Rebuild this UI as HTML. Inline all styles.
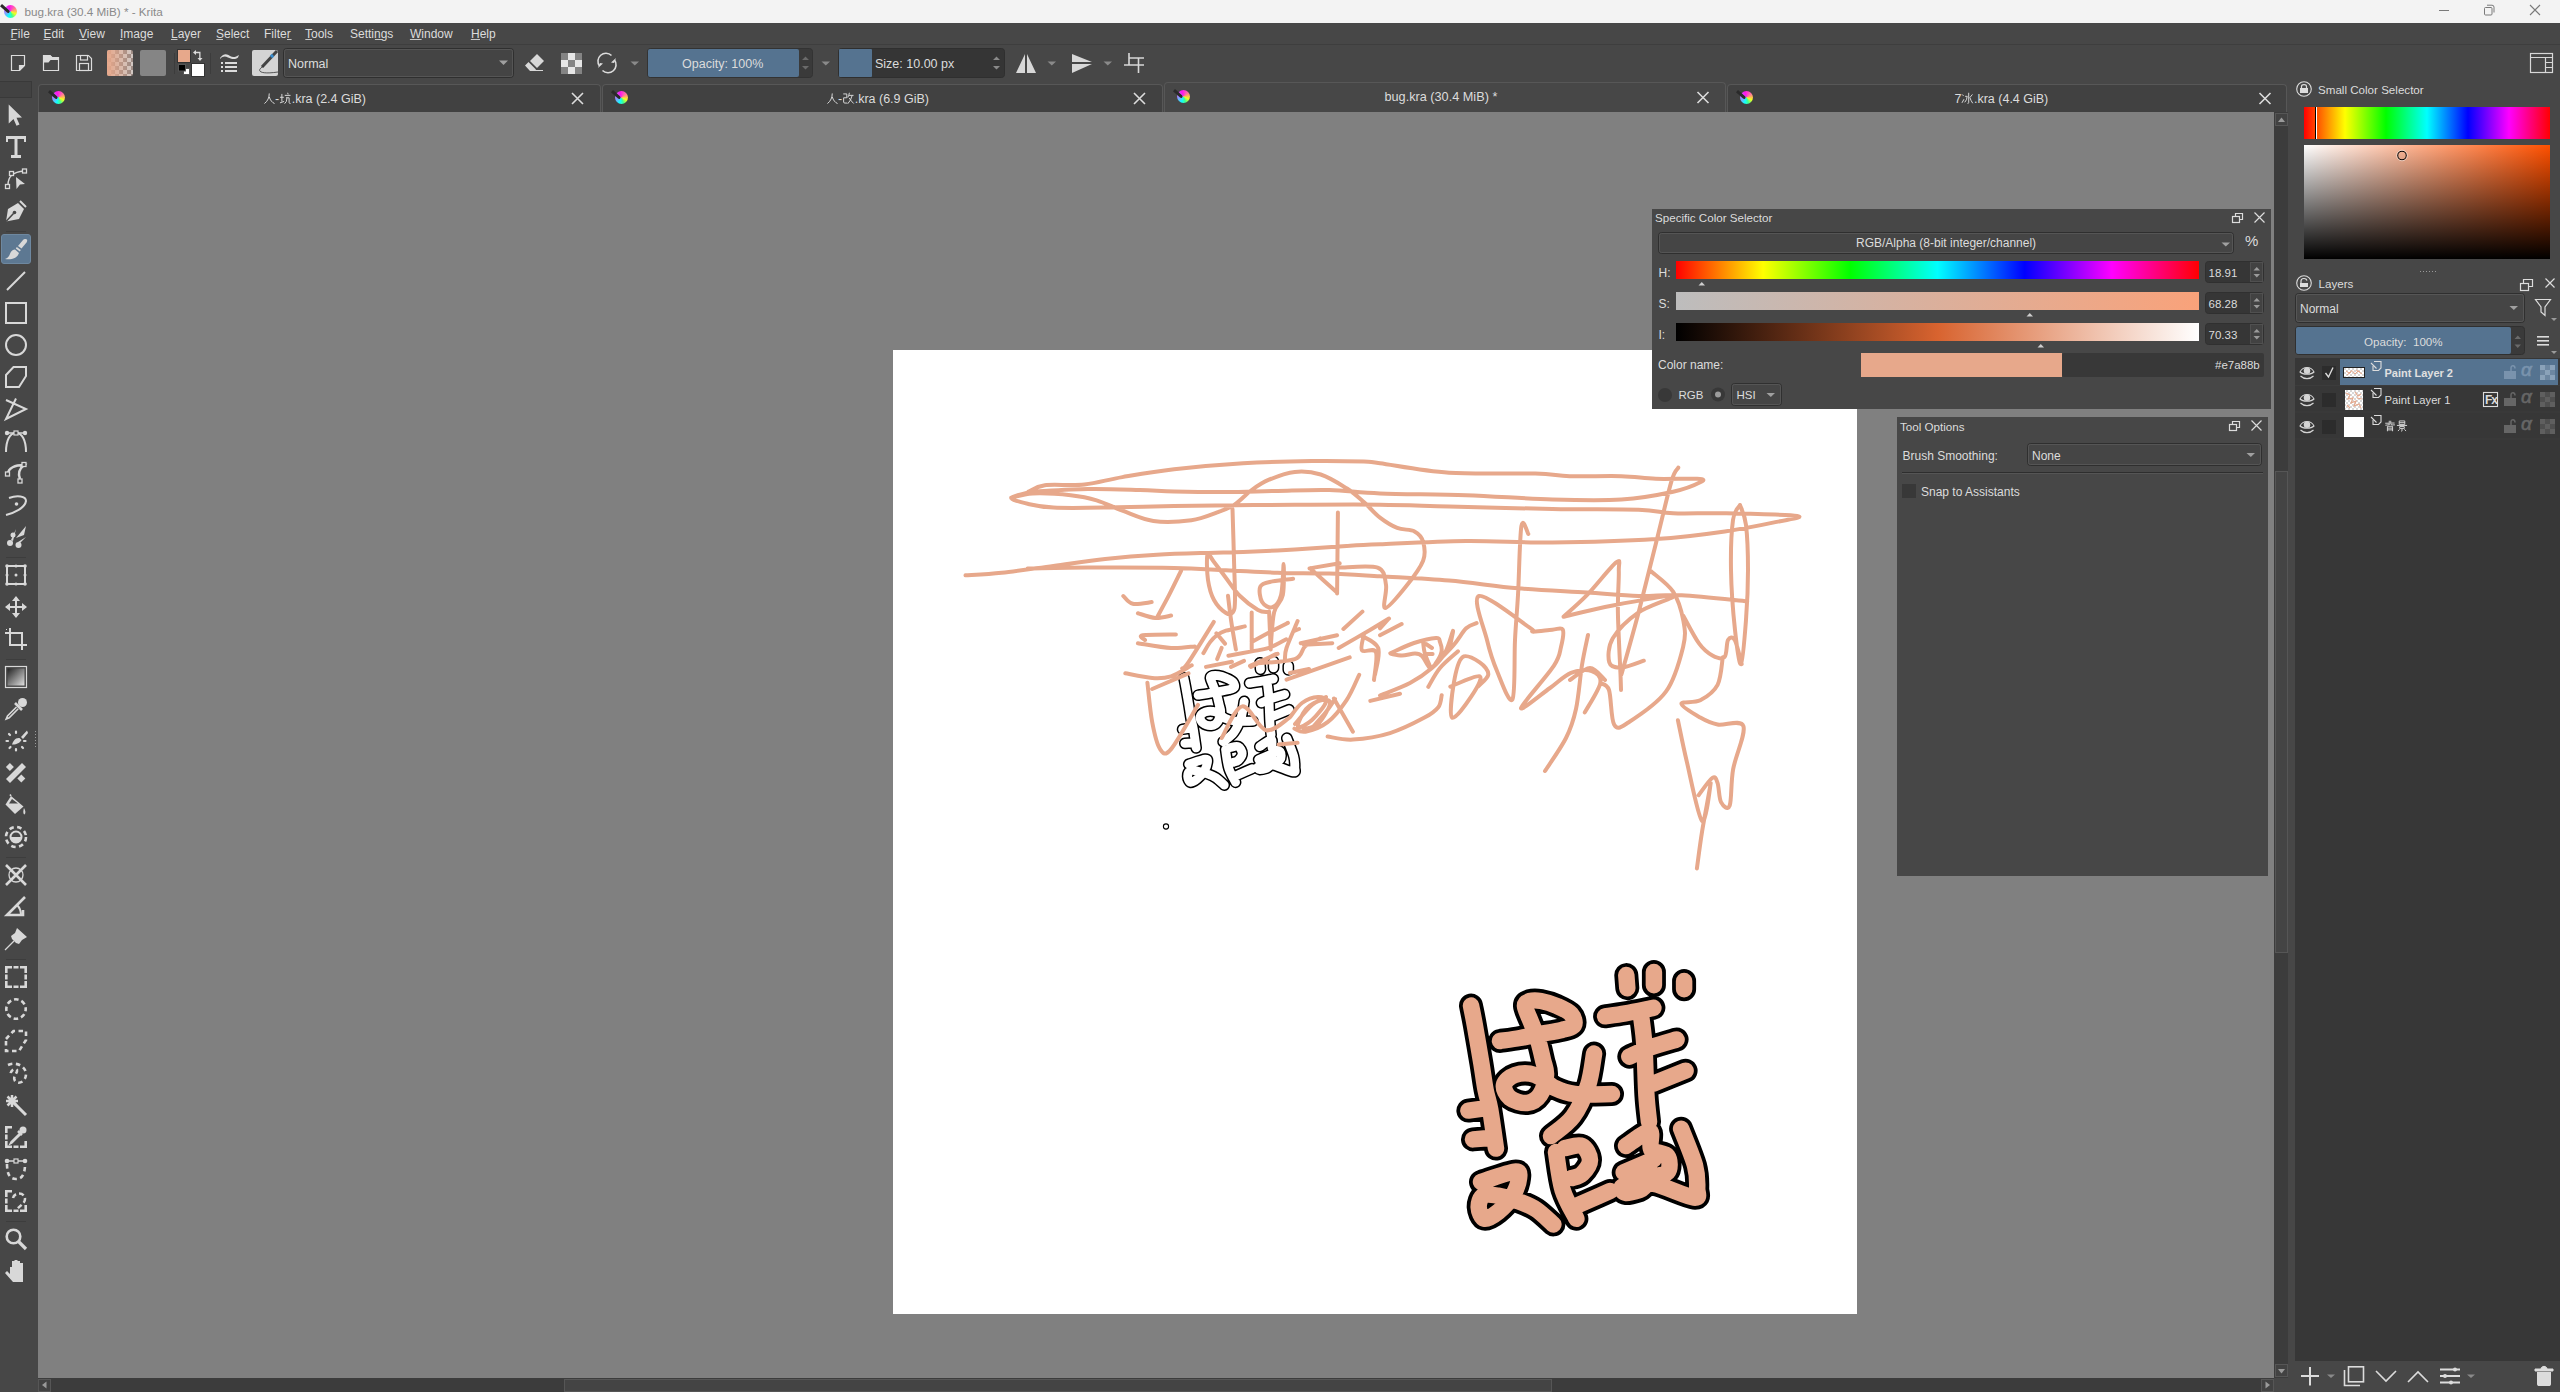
<!DOCTYPE html>
<html><head><meta charset="utf-8">
<style>
*{box-sizing:border-box;margin:0;padding:0}
html,body{width:2560px;height:1392px;overflow:hidden;background:#474747;font-family:"Liberation Sans",sans-serif;color:#dcdcdc}
.a{position:absolute}
.t{position:absolute;font-size:12px;line-height:12px;white-space:pre;color:#dcdcdc}
svg{position:absolute;overflow:visible}
#title{left:0;top:0;width:2560px;height:23px;background:#f3f3f3}
#menubar{left:0;top:23px;width:2560px;height:22px;background:#474747;border-bottom:1px solid #3e3e3e}
.u{text-decoration:underline;text-underline-offset:2px}
.tab{position:absolute;top:84px;height:28px;background:#414141;border:1px solid #575757;border-bottom:none;border-radius:4px 4px 0 0}
#canvasbg{left:38px;top:112px;width:2236px;height:1266px;background:#808080}
#paper{left:893px;top:350px;width:964px;height:964px;background:#fff}
.sb{position:absolute;background:#3c3c3c}
.sbtn{position:absolute;background:#424242;border:1px solid #565656}
.float{position:absolute;background:#474747;border:1px solid #3a3a3a}
.field{position:absolute;background:#353535;border-radius:3px}
.combo{position:absolute;background:linear-gradient(#4a4a4a,#424242);border:1px solid #2e2e2e;border-radius:3px;box-shadow:inset 0 0 0 1px #575757}
.blue{background:#557390}
.arrow{position:absolute;width:0;height:0;border-left:5px solid transparent;border-right:5px solid transparent;border-top:5px solid #9a9a9a}
.klogo{position:absolute;width:13px;height:13px;border-radius:50%;background:conic-gradient(from -20deg,#ff10f0,#ff60b0 60deg,#ffb060 100deg,#f0ff20 135deg,#40ff90 180deg,#10ffff 220deg,#80a0ff 270deg,#c070ff 310deg,#ff10f0)}
.klogo::after{content:"";position:absolute;left:-1.5px;top:-0.5px;width:11px;height:2.6px;background:#2a2a2a;transform:rotate(42deg);transform-origin:0 0;border-radius:0 2px 2px 0}
.cj{position:static!important;display:inline-block;vertical-align:-0.1em;width:1em;height:1em;overflow:visible}
</style></head><body>
<!-- title bar -->
<div id="title" class="a"></div>
<div class="klogo" style="left:3.5px;top:4.5px"></div>
<div class="t" style="left:24.5px;top:6px;font-size:11.7px;color:#8a8a8a">bug.kra (30.4 MiB) * - Krita</div>
<svg style="left:2436px;top:4px" width="110" height="16">
 <path d="M3 6.5 H13" stroke="#7a7a7a" stroke-width="1"/>
 <rect x="48.5" y="3.5" width="7.5" height="7.5" rx="1" fill="none" stroke="#7a7a7a"/><path d="M51 1.2 H56 Q58 1.2 58 3.2 V8.5" fill="none" stroke="#7a7a7a"/>
 <path d="M94 1 L104 11 M104 1 L94 11" stroke="#7a7a7a" stroke-width="1.1"/>
</svg>

<!-- menu -->
<div id="menubar" class="a"></div>
<div class="t" style="left:10.5px;top:28px">File</div>
<div class="t" style="left:43.5px;top:28px">Edit</div>
<div class="t" style="left:79px;top:28px">View</div>
<div class="t" style="left:120px;top:28px">Image</div>
<div class="t" style="left:171px;top:28px">Layer</div>
<div class="t" style="left:216px;top:28px">Select</div>
<div class="t" style="left:264px;top:28px">Filter</div>
<div class="t" style="left:305px;top:28px">Tools</div>
<div class="t" style="left:350px;top:28px">Settings</div>
<div class="t" style="left:410px;top:28px">Window</div>
<div class="t" style="left:471px;top:28px">Help</div>


<svg style="left:0;top:0" width="600" height="45"><rect x="10.7" y="39" width="5.8" height="1" fill="#c8c8c8"/><rect x="43.5" y="39" width="6.5" height="1" fill="#c8c8c8"/><rect x="79.0" y="39" width="8.0" height="1" fill="#c8c8c8"/><rect x="120.0" y="39" width="2.5" height="1" fill="#c8c8c8"/><rect x="171.0" y="39" width="6.5" height="1" fill="#c8c8c8"/><rect x="216.3" y="39" width="6.7" height="1" fill="#c8c8c8"/><rect x="287.0" y="39" width="4.6" height="1" fill="#c8c8c8"/><rect x="305.3" y="39" width="6.7" height="1" fill="#c8c8c8"/><rect x="374.9" y="39" width="7.1" height="1" fill="#c8c8c8"/><rect x="409.9" y="39" width="11.7" height="1" fill="#c8c8c8"/><rect x="470.8" y="39" width="9.2" height="1" fill="#c8c8c8"/></svg>
<!-- TOOLBAR_START -->
<svg style="left:0;top:0" width="2560" height="90">
 <defs>
  <pattern id="chk4" width="8" height="8" patternUnits="userSpaceOnUse" x="107" y="50"><rect width="8" height="8" fill="#d0c8c4"/><rect width="4" height="4" fill="#9a8a84"/><rect x="4" y="4" width="4" height="4" fill="#9a8a84"/></pattern>
  <linearGradient id="grd" x1="0" x2="1"><stop offset="0" stop-color="#e7a88b"/><stop offset="1" stop-color="#e7a88b" stop-opacity="0"/></linearGradient>
 </defs>
 <g fill="none" stroke="#dcdcdc" stroke-width="1.2">
  <!-- new -->
  <path d="M11.5 55.5 H24.5 V65.5 L19.5 70.5 H11.5 Z"/>
  <path d="M19.5 70.5 V65.5 H24.5" />
  <!-- open -->
  <path d="M43.5 70.5 V55.5 H50 L52 57.5 H58.5 V70.5 Z"/>
 </g>
 <path d="M19.5 66 H24.5 L19.5 71 Z" fill="#dcdcdc"/>
 <path d="M43 55 H50 L52 57 H59 V60 H50.5 L48.5 62.5 H43 Z" fill="#dcdcdc"/>
 <g fill="none" stroke="#dcdcdc" stroke-width="1.2">
  <!-- save -->
  <path d="M76.5 55.5 H88.5 L91.5 58.5 V70.5 H76.5 Z"/>
  <rect x="80.5" y="55.5" width="7" height="4.5"/>
  <rect x="79.5" y="63.5" width="9" height="7"/>
 </g>
 <!-- gradient swatch -->
 <rect x="107" y="50" width="26" height="26" rx="2" fill="url(#chk4)"/>
 <rect x="107" y="50" width="26" height="26" rx="2" fill="url(#grd)"/>
 <!-- pattern swatch -->
 <rect x="140" y="50" width="26" height="26" rx="2" fill="#858585"/>
 <rect x="174" y="53" width="1" height="21" fill="#3c3c3c"/>
 <rect x="210" y="53" width="1" height="21" fill="#3c3c3c"/>
 <!-- fg/bg -->
 <rect x="177.5" y="49.5" width="13" height="13" fill="#e7a88b" stroke="#333" stroke-width="1"/>
 <rect x="191.5" y="63.5" width="13" height="13" fill="#fff" stroke="#333" stroke-width="1"/>
 <rect x="183.5" y="68.5" width="6" height="6" fill="#fff" stroke="#555" stroke-width="1"/>
 <rect x="178.5" y="64.5" width="7" height="6.5" fill="#000" stroke="#555" stroke-width="1"/>
 <path d="M193 52.5 L196 50 V51.8 H200.5 V58 H202.5 L200 61 L197.5 58 H199.2 V53.2 H196 V55 Z" fill="#dcdcdc"/>
 <!-- brush settings -->
 <path d="M220 58 C224 53, 227 54, 230 56 S236 57, 239 55 L238 57.5 C235 60, 231 59, 228 57.5 S223 56, 220 59 Z" fill="#dcdcdc"/>
 <g fill="#dcdcdc"><rect x="221" y="62" width="2" height="2"/><rect x="225" y="62" width="12" height="2"/>
 <rect x="221" y="66" width="2" height="2"/><rect x="225" y="66" width="12" height="2"/>
 <rect x="221" y="70" width="2" height="2"/><rect x="225" y="70" width="12" height="2"/></g>
 <!-- preset -->
 <rect x="252" y="50" width="26" height="26" rx="2" fill="#d4d4d4"/>
 <path d="M277 51 L262 67" stroke="#444" stroke-width="3"/>
 <path d="M271 57 L273 55" stroke="#3a8fd0" stroke-width="3.2"/>
 <path d="M264 66 C256 70, 258 75, 278 72" fill="none" stroke="#333" stroke-width="0.8"/>
 <!-- blend combo -->
 <rect x="283.5" y="48.5" width="230" height="29" rx="3" fill="#444" stroke="#2f2f2f"/>
 <rect x="284.5" y="49.5" width="228" height="27" rx="2" fill="none" stroke="#555" stroke-width="1"/>
 <path d="M499 60.5 H508 L503.5 65 Z" fill="#a0a0a0"/>
 <!-- eraser -->
 <path d="M537 54 L544 61 L537 68 L530 61 Z" fill="#d8d8d8"/>
 <path d="M525 65.5 L528.5 62 L535.5 69 L536 70 H543 V71 H530 Z" fill="#d8d8d8"/>
 <!-- checker -->
 <g><rect x="561" y="53" width="21" height="21" fill="#e6e6e6"/>
 <rect x="561" y="53" width="7" height="7" fill="#848484"/><rect x="575" y="53" width="7" height="7" fill="#848484"/>
 <rect x="568" y="60" width="7" height="7" fill="#848484"/>
 <rect x="561" y="67" width="7" height="7" fill="#848484"/><rect x="575" y="67" width="7" height="7" fill="#848484"/></g>
 <!-- refresh -->
 <path d="M611.5 55.5 A8 8 0 0 0 599.5 66" fill="none" stroke="#dcdcdc" stroke-width="1.6"/>
 <path d="M602.5 70.5 A8 8 0 0 0 614.5 60" fill="none" stroke="#dcdcdc" stroke-width="1.6"/>
 <path d="M598 68 L603 63.5 L600 63 Z" fill="#dcdcdc"/><path d="M616 58 L611 62.5 L614 63 Z" fill="#dcdcdc"/>
 <path d="M630.5 61.5 H639 L634.8 65.5 Z" fill="#8a8a8a"/>
 <!-- opacity -->
 <rect x="647.5" y="48.5" width="165" height="29" rx="3" fill="#3a3a3a" stroke="#333"/>
 <rect x="648" y="49" width="151" height="28" rx="2" fill="#557390"/>
 <path d="M802 60 H809 L805.5 56.5 Z M802 66 H809 L805.5 69.5 Z" fill="#6a6a6a"/>
 <path d="M821.5 61.5 H830 L825.8 65.5 Z" fill="#8a8a8a"/>
 <!-- size -->
 <rect x="838.5" y="48.5" width="166" height="29" rx="3" fill="#353535" stroke="#2f2f2f"/>
 <rect x="839" y="49" width="33" height="28" rx="1" fill="#557390"/>
 <path d="M993 60 H1000 L996.5 56.5 Z M993 66 H1000 L996.5 69.5 Z" fill="#8a8a8a"/>
 <!-- mirror -->
 <path d="M1025 54 V73 H1016 Z M1027 54 V73 H1036 Z" fill="#d8d8d8"/>
 <path d="M1047.5 61.5 H1056 L1051.8 65.5 Z" fill="#8a8a8a"/>
 <path d="M1072 54 L1092 62 H1072 Z M1072 64 H1092 L1072 73 Z" fill="#d8d8d8"/>
 <path d="M1103.5 61.5 H1112 L1107.8 65.5 Z" fill="#8a8a8a"/>
 <!-- wrap -->
 <path d="M1129 53 V65 M1124 65 H1144 M1129 58 H1144 M1138.5 58 V73" stroke="#d8d8d8" stroke-width="1.6" fill="none"/>
 <!-- layout icon right -->
 <g fill="none" stroke="#d8d8d8" stroke-width="1.2"><rect x="2530.5" y="53.5" width="22" height="19"/><path d="M2530.5 57.5 H2552.5 M2545.5 57.5 V72.5 M2545.5 62.5 H2552.5 M2545.5 67.5 H2552.5"/></g>
</svg>
<div class="t" style="left:288px;top:58px;font-size:12.5px">Normal</div>
<div class="t" style="left:682px;top:58px;font-size:12.5px">Opacity: 100%</div>
<div class="t" style="left:875px;top:58px;font-size:12.5px">Size: 10.00 px</div>


<!-- canvas -->
<div id="canvasbg" class="a"></div>
<div id="paper" class="a"></div>
<!-- DRAW_START -->
<svg style="left:0;top:0" width="2560" height="1392">
 <g transform="translate(463.1,185.1) scale(0.49)" fill="none" stroke-linecap="round" stroke-linejoin="round"><path d="M1471.0 1005.6 C1471.6 1008.8 1473.1 1015.5 1474.8 1025.0 C1476.5 1034.5 1479.5 1052.0 1481.3 1062.8 C1483.1 1073.6 1484.1 1082.2 1485.6 1090.0 C1487.1 1097.8 1488.5 1099.7 1490.2 1109.5 C1491.9 1119.3 1495.0 1142.1 1496.0 1148.6 M1468.4 1110.6 L1484.5 1108.3 M1473.0 1139.4 L1486.8 1138.2 M1500.0 1041.0 C1503.3 1040.5 1513.3 1039.2 1520.0 1038.0 C1526.7 1036.8 1533.0 1035.3 1540.0 1034.0 C1547.0 1032.7 1556.3 1031.5 1562.0 1030.0 C1567.7 1028.5 1572.5 1027.7 1574.0 1025.0 C1575.5 1022.3 1573.8 1017.2 1571.0 1014.0 C1568.2 1010.8 1562.0 1008.2 1557.0 1006.0 C1552.0 1003.8 1545.5 1001.8 1541.0 1001.0 C1536.5 1000.2 1532.7 1000.2 1530.0 1001.0 C1527.3 1001.8 1524.8 1002.5 1525.0 1006.0 C1525.2 1009.5 1528.8 1016.3 1531.0 1022.0 C1533.2 1027.7 1536.0 1033.7 1538.0 1040.0 C1540.0 1046.3 1541.7 1054.2 1543.0 1060.0 C1544.3 1065.8 1546.5 1069.2 1546.0 1075.0 C1545.5 1080.8 1543.2 1090.3 1540.0 1095.0 C1536.8 1099.7 1532.0 1102.5 1527.0 1103.0 C1522.0 1103.5 1513.8 1101.0 1510.0 1098.0 C1506.2 1095.0 1503.2 1088.8 1504.0 1085.0 C1504.8 1081.2 1509.8 1076.7 1515.0 1075.0 C1520.2 1073.3 1528.3 1072.8 1535.0 1075.0 C1541.7 1077.2 1548.3 1084.8 1555.0 1088.0 C1561.7 1091.2 1565.5 1093.0 1575.0 1094.0 C1584.5 1095.0 1605.8 1094.0 1612.0 1094.0 M1594.1 1053.6 C1593.1 1058.9 1591.5 1075.2 1588.0 1085.7 C1584.5 1096.2 1579.2 1108.3 1573.0 1116.7 C1566.8 1125.1 1554.7 1132.8 1551.0 1136.0 M1626.3 975.1 L1627.3 988.2 M1653.9 972.1 L1653.9 985.2 M1684.1 981.1 L1684.1 989.2 M1605.1 1016.3 C1608.5 1015.8 1617.2 1014.7 1625.3 1013.3 C1633.3 1011.9 1648.7 1008.7 1653.4 1007.8 M1641.3 1017.4 C1641.8 1022.1 1643.6 1032.6 1644.4 1045.5 C1645.2 1058.4 1645.6 1082.3 1646.4 1095.0 C1647.2 1107.7 1648.6 1117.3 1649.0 1121.8 M1629.3 1056.6 C1632.8 1055.1 1642.5 1050.3 1650.4 1047.5 C1658.3 1044.7 1672.2 1040.8 1676.6 1039.5 M1653.4 1083.7 L1685.6 1070.7 M1481.0 1181.9 C1486.6 1180.2 1508.1 1172.2 1514.4 1171.6 C1520.7 1171.0 1519.4 1174.2 1519.0 1178.4 C1518.6 1182.6 1515.5 1191.2 1512.1 1196.8 C1508.6 1202.4 1502.9 1208.1 1498.3 1211.8 C1493.7 1215.5 1487.8 1219.5 1484.5 1218.7 C1481.2 1217.9 1478.9 1211.0 1478.7 1207.2 C1478.5 1203.4 1480.0 1197.6 1483.3 1195.7 C1486.6 1193.8 1492.3 1194.8 1498.3 1195.7 C1504.2 1196.7 1512.7 1199.1 1519.0 1201.4 C1525.3 1203.7 1530.5 1205.7 1536.2 1209.5 C1541.9 1213.3 1550.5 1221.9 1553.4 1224.4 M1565.0 1148.0 C1567.8 1147.7 1577.8 1144.0 1582.0 1146.0 C1586.2 1148.0 1590.0 1155.3 1590.0 1160.0 C1590.0 1164.7 1585.0 1171.0 1582.0 1174.0 C1579.0 1177.0 1573.7 1177.3 1572.0 1178.0 M1556.0 1152.0 C1557.1 1158.3 1559.2 1178.9 1562.6 1190.0 C1566.0 1201.1 1574.1 1213.9 1576.4 1218.7 M1570.7 1208.3 C1575.5 1206.2 1592.9 1198.6 1599.4 1195.7 C1606.0 1192.8 1608.2 1191.8 1610.0 1191.0 M1626.0 1145.9 C1629.9 1143.5 1645.3 1131.0 1649.5 1131.6 C1653.7 1132.2 1648.3 1145.3 1651.3 1149.4 C1654.3 1153.5 1664.7 1152.2 1667.4 1156.0 C1670.1 1159.8 1670.5 1168.9 1667.4 1172.4 C1664.3 1175.9 1655.5 1175.1 1649.0 1177.0 C1642.5 1178.9 1632.9 1182.1 1628.3 1183.9 C1623.7 1185.7 1621.8 1186.5 1621.4 1188.0 C1621.0 1189.5 1622.9 1192.7 1626.0 1193.0 C1629.1 1193.3 1635.4 1191.5 1640.0 1190.0 C1644.6 1188.5 1644.6 1182.6 1653.6 1183.9 C1662.6 1185.2 1686.5 1196.8 1693.8 1197.6 C1701.1 1198.3 1697.0 1193.8 1697.2 1188.4 C1697.4 1183.1 1697.7 1175.5 1695.0 1165.5 C1692.3 1155.5 1683.4 1134.8 1681.1 1128.7 M1623.7 1172.4 L1653.6 1159.7" stroke="#000" stroke-width="24"/><path d="M1471.0 1005.6 C1471.6 1008.8 1473.1 1015.5 1474.8 1025.0 C1476.5 1034.5 1479.5 1052.0 1481.3 1062.8 C1483.1 1073.6 1484.1 1082.2 1485.6 1090.0 C1487.1 1097.8 1488.5 1099.7 1490.2 1109.5 C1491.9 1119.3 1495.0 1142.1 1496.0 1148.6 M1468.4 1110.6 L1484.5 1108.3 M1473.0 1139.4 L1486.8 1138.2 M1500.0 1041.0 C1503.3 1040.5 1513.3 1039.2 1520.0 1038.0 C1526.7 1036.8 1533.0 1035.3 1540.0 1034.0 C1547.0 1032.7 1556.3 1031.5 1562.0 1030.0 C1567.7 1028.5 1572.5 1027.7 1574.0 1025.0 C1575.5 1022.3 1573.8 1017.2 1571.0 1014.0 C1568.2 1010.8 1562.0 1008.2 1557.0 1006.0 C1552.0 1003.8 1545.5 1001.8 1541.0 1001.0 C1536.5 1000.2 1532.7 1000.2 1530.0 1001.0 C1527.3 1001.8 1524.8 1002.5 1525.0 1006.0 C1525.2 1009.5 1528.8 1016.3 1531.0 1022.0 C1533.2 1027.7 1536.0 1033.7 1538.0 1040.0 C1540.0 1046.3 1541.7 1054.2 1543.0 1060.0 C1544.3 1065.8 1546.5 1069.2 1546.0 1075.0 C1545.5 1080.8 1543.2 1090.3 1540.0 1095.0 C1536.8 1099.7 1532.0 1102.5 1527.0 1103.0 C1522.0 1103.5 1513.8 1101.0 1510.0 1098.0 C1506.2 1095.0 1503.2 1088.8 1504.0 1085.0 C1504.8 1081.2 1509.8 1076.7 1515.0 1075.0 C1520.2 1073.3 1528.3 1072.8 1535.0 1075.0 C1541.7 1077.2 1548.3 1084.8 1555.0 1088.0 C1561.7 1091.2 1565.5 1093.0 1575.0 1094.0 C1584.5 1095.0 1605.8 1094.0 1612.0 1094.0 M1594.1 1053.6 C1593.1 1058.9 1591.5 1075.2 1588.0 1085.7 C1584.5 1096.2 1579.2 1108.3 1573.0 1116.7 C1566.8 1125.1 1554.7 1132.8 1551.0 1136.0 M1626.3 975.1 L1627.3 988.2 M1653.9 972.1 L1653.9 985.2 M1684.1 981.1 L1684.1 989.2 M1605.1 1016.3 C1608.5 1015.8 1617.2 1014.7 1625.3 1013.3 C1633.3 1011.9 1648.7 1008.7 1653.4 1007.8 M1641.3 1017.4 C1641.8 1022.1 1643.6 1032.6 1644.4 1045.5 C1645.2 1058.4 1645.6 1082.3 1646.4 1095.0 C1647.2 1107.7 1648.6 1117.3 1649.0 1121.8 M1629.3 1056.6 C1632.8 1055.1 1642.5 1050.3 1650.4 1047.5 C1658.3 1044.7 1672.2 1040.8 1676.6 1039.5 M1653.4 1083.7 L1685.6 1070.7 M1481.0 1181.9 C1486.6 1180.2 1508.1 1172.2 1514.4 1171.6 C1520.7 1171.0 1519.4 1174.2 1519.0 1178.4 C1518.6 1182.6 1515.5 1191.2 1512.1 1196.8 C1508.6 1202.4 1502.9 1208.1 1498.3 1211.8 C1493.7 1215.5 1487.8 1219.5 1484.5 1218.7 C1481.2 1217.9 1478.9 1211.0 1478.7 1207.2 C1478.5 1203.4 1480.0 1197.6 1483.3 1195.7 C1486.6 1193.8 1492.3 1194.8 1498.3 1195.7 C1504.2 1196.7 1512.7 1199.1 1519.0 1201.4 C1525.3 1203.7 1530.5 1205.7 1536.2 1209.5 C1541.9 1213.3 1550.5 1221.9 1553.4 1224.4 M1565.0 1148.0 C1567.8 1147.7 1577.8 1144.0 1582.0 1146.0 C1586.2 1148.0 1590.0 1155.3 1590.0 1160.0 C1590.0 1164.7 1585.0 1171.0 1582.0 1174.0 C1579.0 1177.0 1573.7 1177.3 1572.0 1178.0 M1556.0 1152.0 C1557.1 1158.3 1559.2 1178.9 1562.6 1190.0 C1566.0 1201.1 1574.1 1213.9 1576.4 1218.7 M1570.7 1208.3 C1575.5 1206.2 1592.9 1198.6 1599.4 1195.7 C1606.0 1192.8 1608.2 1191.8 1610.0 1191.0 M1626.0 1145.9 C1629.9 1143.5 1645.3 1131.0 1649.5 1131.6 C1653.7 1132.2 1648.3 1145.3 1651.3 1149.4 C1654.3 1153.5 1664.7 1152.2 1667.4 1156.0 C1670.1 1159.8 1670.5 1168.9 1667.4 1172.4 C1664.3 1175.9 1655.5 1175.1 1649.0 1177.0 C1642.5 1178.9 1632.9 1182.1 1628.3 1183.9 C1623.7 1185.7 1621.8 1186.5 1621.4 1188.0 C1621.0 1189.5 1622.9 1192.7 1626.0 1193.0 C1629.1 1193.3 1635.4 1191.5 1640.0 1190.0 C1644.6 1188.5 1644.6 1182.6 1653.6 1183.9 C1662.6 1185.2 1686.5 1196.8 1693.8 1197.6 C1701.1 1198.3 1697.0 1193.8 1697.2 1188.4 C1697.4 1183.1 1697.7 1175.5 1695.0 1165.5 C1692.3 1155.5 1683.4 1134.8 1681.1 1128.7 M1623.7 1172.4 L1653.6 1159.7" stroke="#fff" stroke-width="18"/></g>
 <path d="M1028.4 491.7 C1031.1 490.6 1035.5 486.4 1044.8 485.2 C1054.1 484.0 1071.6 485.9 1084.5 484.5 C1097.4 483.1 1107.5 479.6 1122.4 477.1 C1137.3 474.6 1154.0 471.6 1174.1 469.3 C1194.2 467.0 1220.1 464.7 1243.1 463.3 C1266.1 461.9 1292.0 461.3 1312.1 461.0 C1332.2 460.7 1352.5 461.2 1363.8 461.6 C1375.1 462.0 1365.8 461.4 1380.0 463.3 C1394.2 465.2 1423.1 471.1 1449.0 472.8 C1474.9 474.5 1515.1 473.0 1535.2 473.6 C1555.3 474.2 1555.3 475.8 1569.7 476.2 C1584.1 476.6 1607.0 475.8 1621.4 476.2 C1635.8 476.6 1643.3 478.4 1655.9 478.8 C1668.5 479.2 1689.7 478.3 1697.2 478.8 C1704.7 479.3 1704.7 479.9 1700.7 482.0 C1696.7 484.1 1686.3 488.8 1673.1 491.7 C1659.9 494.6 1641.5 498.2 1621.4 499.5 C1601.3 500.8 1578.3 500.2 1552.4 499.5 C1526.5 498.8 1494.9 496.2 1466.2 495.2 C1437.5 494.2 1402.8 494.3 1380.0 493.4 C1357.2 492.5 1346.4 490.4 1329.3 490.0 C1312.2 489.6 1294.8 490.5 1277.6 490.9 C1260.4 491.2 1243.2 492.0 1225.9 492.1 C1208.7 492.2 1188.5 491.8 1174.1 491.4 C1159.7 491.0 1154.1 490.4 1139.7 490.0 C1125.3 489.6 1106.0 488.8 1087.9 489.1 C1069.8 489.4 1040.5 491.3 1031.0 491.7 M1031.0 491.7 C1027.7 492.7 1011.8 495.8 1011.2 497.8 C1010.6 499.8 1020.6 502.2 1027.6 503.8 C1034.6 505.4 1040.5 507.0 1053.4 507.6 C1066.3 508.2 1085.1 507.9 1105.2 507.6 C1125.3 507.3 1152.5 506.4 1174.1 506.0 C1195.6 505.6 1214.4 505.4 1234.5 505.2 C1254.6 505.0 1270.5 504.9 1294.8 504.8 C1319.0 504.7 1354.3 504.4 1380.0 504.7 C1405.7 505.0 1420.3 505.7 1449.0 506.4 C1477.7 507.1 1520.8 508.4 1552.4 509.0 C1584.0 509.6 1618.5 509.1 1638.6 509.8 C1658.7 510.5 1658.7 512.7 1673.1 513.3 C1687.5 513.9 1704.1 512.9 1724.8 513.3 C1745.5 513.7 1788.6 514.5 1797.2 515.9 C1805.8 517.3 1788.7 519.3 1776.6 521.9 C1764.5 524.5 1744.9 528.5 1724.8 531.4 C1704.7 534.3 1684.6 537.2 1655.9 539.1 C1627.2 541.0 1584.0 542.3 1552.4 542.6 C1520.8 542.9 1494.9 540.6 1466.2 540.9 C1437.5 541.2 1399.9 543.4 1380.0 544.3 C1360.1 545.1 1360.8 545.1 1346.6 546.0 C1332.4 546.9 1312.0 548.5 1294.8 549.5 C1277.5 550.5 1257.5 551.5 1243.1 552.1 C1228.7 552.7 1223.0 552.5 1208.6 552.9 C1194.2 553.3 1174.1 553.7 1156.9 554.7 C1139.7 555.7 1122.5 557.1 1105.2 559.0 C1088.0 560.9 1070.7 563.6 1053.4 565.9 C1036.2 568.2 1016.4 571.2 1001.7 572.8 C987.1 574.4 971.5 574.9 965.5 575.3 M1011.2 497.8 C1014.8 497.1 1022.9 493.8 1032.8 493.4 C1042.7 493.0 1060.1 494.0 1070.7 495.2 C1081.3 496.4 1088.0 497.7 1096.6 500.3 C1105.2 502.9 1112.9 507.2 1122.4 510.7 C1131.9 514.1 1141.9 519.4 1153.4 521.0 C1164.9 522.6 1180.8 521.6 1191.4 520.2 C1202.0 518.8 1210.0 515.0 1217.2 512.4 C1224.4 509.8 1228.8 508.4 1234.5 504.7 C1240.2 501.0 1246.0 494.2 1251.7 490.0 C1257.5 485.8 1261.8 482.7 1269.0 479.7 C1276.2 476.7 1286.2 472.8 1294.8 471.9 C1303.4 471.0 1312.1 471.8 1320.7 474.5 C1329.3 477.2 1339.4 483.7 1346.6 488.3 C1353.8 492.9 1358.2 497.2 1363.8 502.1 C1369.4 507.0 1374.4 513.3 1380.0 517.6 C1385.6 521.9 1391.5 525.6 1397.2 527.9 C1403.0 530.2 1410.2 529.1 1414.5 531.4 C1418.8 533.7 1421.7 536.8 1423.1 541.7 C1424.5 546.6 1426.0 553.2 1423.1 560.7 C1420.2 568.2 1412.2 578.7 1405.9 586.6 C1399.6 594.5 1388.5 608.4 1385.2 608.1 C1381.9 607.8 1387.3 591.5 1386.0 584.8 C1384.7 578.0 1385.3 570.5 1377.6 567.6 C1369.9 564.7 1346.0 567.6 1339.7 567.6 M1027.6 568.4 C1037.6 568.3 1063.5 567.7 1087.9 567.6 C1112.3 567.5 1151.1 567.5 1174.1 567.9 C1197.1 568.3 1208.7 569.4 1225.9 570.2 C1243.2 571.0 1260.4 572.2 1277.6 572.8 C1294.8 573.4 1312.2 573.0 1329.3 573.6 C1346.4 574.2 1360.0 575.1 1380.0 576.2 C1400.0 577.4 1426.0 578.5 1449.0 580.5 C1472.0 582.5 1494.9 586.3 1517.9 588.3 C1540.9 590.3 1566.8 591.3 1586.9 592.6 C1607.0 593.9 1622.8 595.6 1638.6 596.0 C1654.4 596.4 1663.6 594.3 1681.7 595.2 C1699.8 596.1 1736.3 600.2 1747.2 601.2 M1678.3 467.6 C1677.2 469.9 1675.1 468.8 1671.4 481.4 C1667.7 494.0 1661.4 521.6 1655.9 543.4 C1650.4 565.2 1644.3 590.5 1638.6 612.4 C1632.8 634.2 1624.3 664.1 1621.4 674.5 M1740.0 505.0 C1741.0 508.3 1744.7 514.2 1746.0 525.0 C1747.3 535.8 1748.0 554.2 1748.0 570.0 C1748.0 585.8 1747.2 604.3 1746.0 620.0 C1744.8 635.7 1742.8 662.3 1741.0 664.0 C1739.2 665.7 1736.7 645.7 1735.0 630.0 C1733.3 614.3 1731.3 588.3 1731.0 570.0 C1730.7 551.7 1731.5 530.8 1733.0 520.0 C1734.5 509.2 1738.8 507.5 1740.0 505.0 M1528.3 534.0 C1527.2 532.7 1523.1 516.0 1521.4 526.2 C1519.7 536.4 1519.1 576.0 1518.0 595.0 C1516.9 614.0 1515.9 622.6 1515.0 640.0 C1514.1 657.4 1515.4 694.3 1512.4 699.5 C1509.4 704.7 1501.2 680.9 1497.0 671.0 C1492.8 661.1 1490.0 652.5 1487.0 640.0 C1484.0 627.5 1471.9 598.0 1479.1 596.0 C1486.3 594.0 1521.0 622.0 1530.0 627.9 C1539.0 633.8 1529.3 631.1 1533.0 631.4 C1536.7 631.7 1547.4 630.0 1552.4 629.7 C1557.4 629.4 1561.4 626.8 1562.8 629.7 C1564.2 632.6 1562.5 640.9 1561.0 646.9 C1559.5 652.9 1560.5 655.7 1553.8 665.9 C1547.1 676.1 1521.6 704.4 1521.0 708.1 C1520.4 711.8 1541.7 693.9 1550.0 688.0 C1558.3 682.1 1564.0 675.6 1571.0 672.8 C1578.0 670.0 1586.8 669.3 1591.7 671.0 C1596.6 672.7 1601.5 676.2 1600.3 683.1 C1599.1 690.0 1587.4 707.5 1584.8 712.4 M1600.3 683.1 C1601.8 684.2 1606.7 683.1 1609.0 690.0 C1611.3 696.9 1610.9 719.0 1614.1 724.5 C1617.2 730.0 1619.3 728.3 1627.9 722.8 C1636.5 717.3 1656.7 704.4 1665.9 691.7 C1675.1 679.1 1680.2 658.7 1683.1 646.9 C1686.0 635.1 1685.1 630.2 1683.4 621.0 C1681.7 611.8 1678.5 600.0 1673.1 591.7 C1667.6 583.4 1654.4 574.5 1650.7 571.0 M1563.6 616.7 C1567.5 613.1 1578.1 604.2 1586.9 595.2 C1595.7 586.2 1610.9 566.4 1616.2 562.4 C1621.5 558.4 1618.5 562.7 1618.8 571.0 C1619.1 579.3 1617.6 595.1 1617.9 612.4 C1618.2 629.6 1620.0 661.6 1620.5 674.5 C1621.0 687.4 1621.0 690.0 1621.0 690.0 C1621.0 690.0 1620.6 677.1 1620.5 674.5 M1563.6 616.7 C1571.8 614.8 1594.5 609.0 1612.8 605.5 C1631.0 602.0 1668.8 594.9 1673.1 596.0 C1677.4 597.1 1648.6 605.4 1638.6 612.4 C1628.5 619.4 1617.7 630.0 1612.8 638.3 C1607.9 646.6 1607.9 657.5 1609.3 662.4 C1610.7 667.3 1615.7 667.9 1621.4 667.6 C1627.2 667.3 1640.1 661.9 1643.8 660.7 M1683.4 615.9 C1686.0 620.5 1694.2 636.8 1699.0 643.4 C1703.8 650.0 1708.2 653.2 1712.4 655.5 C1716.7 657.8 1721.9 659.8 1724.5 657.2 C1727.1 654.6 1726.3 642.9 1728.0 640.0 C1729.7 637.1 1732.5 636.0 1734.8 640.0 C1737.1 644.0 1740.5 660.1 1741.7 664.1 M1722.8 657.2 C1721.9 661.8 1721.3 677.6 1717.6 684.8 C1713.8 692.0 1706.3 697.1 1700.3 700.3 C1694.3 703.5 1681.4 700.9 1681.4 703.8 C1681.4 706.7 1694.3 714.1 1700.3 717.6 C1706.3 721.1 1710.4 723.1 1717.6 724.5 C1724.8 725.9 1740.8 718.7 1743.4 726.2 C1746.0 733.7 1735.4 756.1 1733.1 769.3 C1730.8 782.5 1731.7 800.0 1729.7 805.5 C1727.7 811.0 1723.0 805.8 1721.0 802.1 C1719.0 798.4 1719.0 787.1 1717.6 783.1 C1716.2 779.1 1715.6 775.9 1712.4 777.9 C1709.2 779.9 1700.9 792.3 1698.6 795.2 M1677.9 720.2 C1679.4 727.0 1682.6 743.9 1686.6 760.7 C1690.6 777.5 1698.1 817.3 1702.1 821.0 C1706.1 824.7 1710.7 781.4 1710.7 783.1 C1710.7 784.8 1704.4 817.2 1702.1 831.4 C1699.8 845.6 1697.8 862.2 1696.9 868.4 M1588.0 635.0 C1587.0 640.0 1584.0 652.7 1582.0 665.0 C1580.0 677.3 1578.7 696.8 1576.0 709.0 C1573.3 721.2 1571.2 727.7 1566.0 738.0 C1560.8 748.3 1548.5 765.5 1545.0 771.0 M1570.0 680.0 C1573.3 678.0 1584.2 668.0 1590.0 668.0 C1595.8 668.0 1602.5 678.0 1605.0 680.0 M1123.3 596.0 C1124.9 597.3 1128.1 602.8 1132.8 603.8 C1137.5 604.8 1148.5 602.4 1151.7 602.1 M1137.9 613.2 C1140.8 614.0 1149.8 617.5 1155.3 617.9 C1160.8 618.3 1168.5 616.0 1171.1 615.6 M1181.0 571.0 C1179.0 575.0 1173.0 587.4 1169.0 595.2 C1165.0 603.0 1158.9 613.9 1156.9 617.6 M1145.0 640.0 C1144.6 639.2 1137.5 636.2 1142.7 635.3 C1147.9 634.4 1170.4 634.6 1175.9 634.5 M1137.9 643.2 C1143.4 644.0 1161.6 647.5 1171.1 648.0 C1180.6 648.5 1190.8 646.7 1194.8 646.4 M1213.8 621.9 C1209.6 628.6 1193.8 654.4 1188.5 662.2 C1183.2 670.0 1183.2 667.5 1182.2 668.5 M1125.3 673.3 C1129.8 674.1 1144.6 677.5 1152.2 678.0 C1159.8 678.5 1164.5 678.5 1171.1 676.4 C1177.7 674.3 1188.3 667.1 1191.7 665.3 M1147.4 682.7 C1148.2 689.3 1150.1 711.1 1152.2 722.2 C1154.3 733.3 1156.9 744.6 1160.1 749.1 C1163.2 753.6 1164.8 756.5 1171.1 749.1 C1177.4 741.7 1193.5 712.3 1198.0 704.9 M1152.2 689.0 L1188.5 673.3 M1228.0 595.8 C1228.5 600.0 1229.9 612.1 1231.2 621.1 C1232.5 630.1 1235.1 644.8 1235.9 649.5 M1269.1 611.6 L1270.7 649.5 M1297.6 621.1 C1295.8 625.6 1288.6 641.7 1286.5 648.0 C1284.4 654.3 1285.2 657.2 1284.9 659.1 M1300.7 643.2 L1337.1 635.3 M1303.9 644.8 L1332.3 643.2 M1286.5 679.6 L1349.7 657.4 M1343.4 629.0 L1362.4 611.6 M1338.7 648.0 C1343.9 645.0 1361.6 634.9 1370.0 630.0 C1378.4 625.1 1385.8 620.4 1389.0 618.5 M1360.8 635.3 C1363.7 637.4 1375.8 641.4 1378.2 648.0 C1380.6 654.6 1375.5 670.3 1375.0 674.8 M1370.3 700.9 L1400.0 693.8 M1327.6 736.5 C1331.8 737.0 1342.5 740.2 1352.9 739.6 C1363.3 739.0 1378.1 736.8 1390.0 733.1 C1401.9 729.4 1416.5 721.9 1424.5 717.6 C1432.5 713.3 1435.4 710.9 1438.3 707.2 C1441.2 703.5 1441.1 697.2 1441.7 695.2 M1221.7 738.0 C1225.1 732.7 1234.8 707.7 1242.2 706.4 C1249.6 705.1 1258.1 728.4 1266.0 730.2 C1273.9 732.1 1285.8 719.6 1289.7 717.5 M1333.9 698.5 L1352.9 731.7 M1359.2 674.8 C1357.1 679.0 1351.9 692.2 1346.6 700.1 C1341.3 708.0 1334.4 716.9 1327.6 722.2 C1320.8 727.5 1311.0 730.6 1305.5 731.7 C1300.0 732.8 1296.2 729.1 1294.4 728.6 M1278.6 744.4 L1297.6 742.8 M1293.1 578.8 C1289.6 579.2 1277.9 580.1 1272.4 581.4 C1266.9 582.7 1262.0 583.1 1260.3 586.6 C1258.6 590.1 1260.1 598.7 1262.1 602.1 C1264.1 605.5 1269.2 608.4 1272.4 607.2 C1275.6 606.1 1279.1 602.4 1281.0 595.2 C1282.9 588.0 1283.3 564.1 1283.6 564.1 C1283.9 564.1 1284.4 587.2 1282.8 595.2 C1281.2 603.2 1276.1 603.8 1274.1 612.4 C1272.1 621.0 1271.3 641.1 1270.7 646.9 M1309.5 568.4 L1339.7 563.3 M1310.3 568.4 L1336.2 591.7 M1337.9 512.4 L1337.1 593.4 M1363.8 634.8 C1363.5 637.4 1360.0 647.4 1362.0 650.3 C1364.0 653.2 1373.9 647.1 1375.9 652.1 C1377.9 657.1 1374.3 675.4 1374.0 680.0 M1250.0 665.9 L1277.6 653.8 M1450.3 686.6 C1455.2 684.9 1476.2 674.5 1479.7 676.2 C1483.2 677.9 1475.6 690.0 1471.0 696.9 C1466.4 703.8 1455.0 719.9 1452.1 717.6 C1449.2 715.3 1452.1 693.2 1453.8 683.1 C1455.5 673.0 1458.1 660.7 1462.4 657.2 C1466.7 653.8 1475.4 659.5 1479.7 662.4 C1484.0 665.3 1488.6 670.5 1488.3 674.5 C1488.0 678.5 1479.6 684.6 1477.9 686.6 M1390.3 653.3 C1394.2 651.6 1406.4 645.5 1414.0 643.0 C1421.6 640.5 1431.7 638.2 1436.0 638.0 C1440.3 637.8 1439.1 639.7 1440.0 642.0 C1440.9 644.3 1442.2 648.5 1441.5 652.0 C1440.8 655.5 1437.9 660.3 1436.0 663.0 C1434.1 665.7 1432.3 669.2 1430.0 668.0 C1427.7 666.8 1424.5 658.4 1422.0 656.0 C1419.5 653.6 1418.3 653.6 1415.0 653.5 C1411.7 653.4 1406.0 655.5 1402.0 655.5 C1398.0 655.5 1392.8 654.1 1391.0 653.8 M1423.1 642.1 C1423.4 644.0 1423.6 649.3 1424.8 653.3 C1426.0 657.3 1429.1 664.1 1430.0 666.2 M1426.0 644.0 L1432.0 648.0 M1425.0 654.0 L1432.6 654.0 M1380.0 695.5 C1385.0 693.4 1401.3 687.6 1410.0 683.0 C1418.7 678.4 1426.2 673.0 1432.0 668.0 C1437.8 663.0 1441.5 659.2 1445.0 653.0 C1448.5 646.8 1451.7 634.6 1453.0 630.9 M1428.3 686.9 C1430.2 683.8 1435.0 673.9 1440.0 668.0 C1445.0 662.1 1455.0 654.1 1458.0 651.3 M1447.0 650.0 C1448.0 646.8 1452.5 631.7 1453.0 631.0 C1453.5 630.3 1450.5 643.5 1450.0 646.0 M1431.7 668.0 C1435.3 664.2 1447.5 652.1 1453.3 645.5 C1459.0 638.9 1462.3 632.0 1466.2 628.3 C1470.1 624.6 1474.9 624.0 1476.6 623.1 M1380.0 635.2 L1401.6 624.0 M1380.0 628.3 L1387.8 619.7 M1203.4 653.1 C1204.6 651.2 1208.0 644.9 1210.3 641.9 C1212.6 638.9 1214.6 636.9 1217.2 635.0 C1219.8 633.1 1221.3 632.1 1225.9 630.7 C1230.5 629.3 1241.7 627.1 1244.8 626.4 M1216.4 633.3 L1225.0 643.6 M1221.6 647.9 L1217.2 659.1 M1251.7 612.6 L1251.7 648.8 M1251.7 641.9 C1254.8 640.2 1264.0 635.2 1270.0 632.0 C1276.0 628.8 1284.9 624.4 1287.9 622.9 M1228.4 655.7 C1232.3 655.0 1244.9 652.7 1251.7 651.4 C1258.5 650.1 1263.2 649.9 1269.0 647.9 C1274.8 645.9 1283.3 640.7 1286.2 639.3 M1206.0 666.9 L1231.9 661.7 M1231.0 666.9 L1244.0 660.9 M1250.9 666.9 L1275.9 654.0 M1256.0 663.4 C1262.5 662.7 1286.6 662.0 1294.8 659.1 C1303.0 656.2 1301.0 649.7 1305.2 646.2 C1309.4 642.8 1317.5 639.7 1320.0 638.4 M1299.0 629.0 L1294.8 630.7 M1289.7 717.5 C1291.8 715.1 1297.3 706.4 1302.0 703.0 C1306.7 699.6 1314.0 697.2 1318.0 697.0 C1322.0 696.8 1327.0 698.2 1326.0 702.0 C1325.0 705.8 1316.7 715.8 1312.0 720.0 C1307.3 724.2 1299.0 728.8 1298.0 727.0 C1297.0 725.2 1302.0 713.5 1306.0 709.0 C1310.0 704.5 1318.0 700.8 1322.0 700.0 C1326.0 699.2 1330.7 700.0 1330.0 704.0 C1329.3 708.0 1322.3 719.8 1318.0 724.0 C1313.7 728.2 1306.3 728.2 1304.0 729.0 M1295.0 724.0 C1297.8 720.8 1306.8 709.5 1312.0 705.0 C1317.2 700.5 1323.7 698.3 1326.0 697.0 M1312.0 728.0 C1314.3 725.3 1322.2 716.8 1326.0 712.0 C1329.8 707.2 1333.5 701.2 1335.0 699.0 M1290.0 673.0 L1309.0 669.0 M1232.5 509.0 C1232.8 517.5 1233.6 544.8 1234.0 560.0 C1234.4 575.2 1235.2 591.3 1235.0 600.0 C1234.8 608.7 1234.5 609.8 1233.0 612.0 C1231.5 614.2 1229.2 615.0 1226.0 613.0 C1222.8 611.0 1217.0 605.5 1214.0 600.0 C1211.0 594.5 1209.1 587.5 1208.0 580.0 C1206.9 572.5 1206.5 557.7 1207.5 554.7 C1208.5 551.7 1210.9 558.1 1214.0 562.0 C1217.1 565.9 1221.7 572.3 1226.0 578.0 C1230.3 583.7 1234.7 590.7 1240.0 596.0 C1245.3 601.3 1253.3 607.3 1258.0 610.0 C1262.7 612.7 1266.3 611.7 1268.0 612.0" fill="none" stroke="#e7a88b" stroke-width="4" stroke-linecap="round" stroke-linejoin="round"/>
 <g fill="none" stroke-linecap="round" stroke-linejoin="round"><path d="M1471.0 1005.6 C1471.6 1008.8 1473.1 1015.5 1474.8 1025.0 C1476.5 1034.5 1479.5 1052.0 1481.3 1062.8 C1483.1 1073.6 1484.1 1082.2 1485.6 1090.0 C1487.1 1097.8 1488.5 1099.7 1490.2 1109.5 C1491.9 1119.3 1495.0 1142.1 1496.0 1148.6 M1468.4 1110.6 L1484.5 1108.3 M1473.0 1139.4 L1486.8 1138.2 M1500.0 1041.0 C1503.3 1040.5 1513.3 1039.2 1520.0 1038.0 C1526.7 1036.8 1533.0 1035.3 1540.0 1034.0 C1547.0 1032.7 1556.3 1031.5 1562.0 1030.0 C1567.7 1028.5 1572.5 1027.7 1574.0 1025.0 C1575.5 1022.3 1573.8 1017.2 1571.0 1014.0 C1568.2 1010.8 1562.0 1008.2 1557.0 1006.0 C1552.0 1003.8 1545.5 1001.8 1541.0 1001.0 C1536.5 1000.2 1532.7 1000.2 1530.0 1001.0 C1527.3 1001.8 1524.8 1002.5 1525.0 1006.0 C1525.2 1009.5 1528.8 1016.3 1531.0 1022.0 C1533.2 1027.7 1536.0 1033.7 1538.0 1040.0 C1540.0 1046.3 1541.7 1054.2 1543.0 1060.0 C1544.3 1065.8 1546.5 1069.2 1546.0 1075.0 C1545.5 1080.8 1543.2 1090.3 1540.0 1095.0 C1536.8 1099.7 1532.0 1102.5 1527.0 1103.0 C1522.0 1103.5 1513.8 1101.0 1510.0 1098.0 C1506.2 1095.0 1503.2 1088.8 1504.0 1085.0 C1504.8 1081.2 1509.8 1076.7 1515.0 1075.0 C1520.2 1073.3 1528.3 1072.8 1535.0 1075.0 C1541.7 1077.2 1548.3 1084.8 1555.0 1088.0 C1561.7 1091.2 1565.5 1093.0 1575.0 1094.0 C1584.5 1095.0 1605.8 1094.0 1612.0 1094.0 M1594.1 1053.6 C1593.1 1058.9 1591.5 1075.2 1588.0 1085.7 C1584.5 1096.2 1579.2 1108.3 1573.0 1116.7 C1566.8 1125.1 1554.7 1132.8 1551.0 1136.0 M1626.3 975.1 L1627.3 988.2 M1653.9 972.1 L1653.9 985.2 M1684.1 981.1 L1684.1 989.2 M1605.1 1016.3 C1608.5 1015.8 1617.2 1014.7 1625.3 1013.3 C1633.3 1011.9 1648.7 1008.7 1653.4 1007.8 M1641.3 1017.4 C1641.8 1022.1 1643.6 1032.6 1644.4 1045.5 C1645.2 1058.4 1645.6 1082.3 1646.4 1095.0 C1647.2 1107.7 1648.6 1117.3 1649.0 1121.8 M1629.3 1056.6 C1632.8 1055.1 1642.5 1050.3 1650.4 1047.5 C1658.3 1044.7 1672.2 1040.8 1676.6 1039.5 M1653.4 1083.7 L1685.6 1070.7 M1481.0 1181.9 C1486.6 1180.2 1508.1 1172.2 1514.4 1171.6 C1520.7 1171.0 1519.4 1174.2 1519.0 1178.4 C1518.6 1182.6 1515.5 1191.2 1512.1 1196.8 C1508.6 1202.4 1502.9 1208.1 1498.3 1211.8 C1493.7 1215.5 1487.8 1219.5 1484.5 1218.7 C1481.2 1217.9 1478.9 1211.0 1478.7 1207.2 C1478.5 1203.4 1480.0 1197.6 1483.3 1195.7 C1486.6 1193.8 1492.3 1194.8 1498.3 1195.7 C1504.2 1196.7 1512.7 1199.1 1519.0 1201.4 C1525.3 1203.7 1530.5 1205.7 1536.2 1209.5 C1541.9 1213.3 1550.5 1221.9 1553.4 1224.4 M1565.0 1148.0 C1567.8 1147.7 1577.8 1144.0 1582.0 1146.0 C1586.2 1148.0 1590.0 1155.3 1590.0 1160.0 C1590.0 1164.7 1585.0 1171.0 1582.0 1174.0 C1579.0 1177.0 1573.7 1177.3 1572.0 1178.0 M1556.0 1152.0 C1557.1 1158.3 1559.2 1178.9 1562.6 1190.0 C1566.0 1201.1 1574.1 1213.9 1576.4 1218.7 M1570.7 1208.3 C1575.5 1206.2 1592.9 1198.6 1599.4 1195.7 C1606.0 1192.8 1608.2 1191.8 1610.0 1191.0 M1626.0 1145.9 C1629.9 1143.5 1645.3 1131.0 1649.5 1131.6 C1653.7 1132.2 1648.3 1145.3 1651.3 1149.4 C1654.3 1153.5 1664.7 1152.2 1667.4 1156.0 C1670.1 1159.8 1670.5 1168.9 1667.4 1172.4 C1664.3 1175.9 1655.5 1175.1 1649.0 1177.0 C1642.5 1178.9 1632.9 1182.1 1628.3 1183.9 C1623.7 1185.7 1621.8 1186.5 1621.4 1188.0 C1621.0 1189.5 1622.9 1192.7 1626.0 1193.0 C1629.1 1193.3 1635.4 1191.5 1640.0 1190.0 C1644.6 1188.5 1644.6 1182.6 1653.6 1183.9 C1662.6 1185.2 1686.5 1196.8 1693.8 1197.6 C1701.1 1198.3 1697.0 1193.8 1697.2 1188.4 C1697.4 1183.1 1697.7 1175.5 1695.0 1165.5 C1692.3 1155.5 1683.4 1134.8 1681.1 1128.7 M1623.7 1172.4 L1653.6 1159.7" stroke="#000" stroke-width="24"/><path d="M1471.0 1005.6 C1471.6 1008.8 1473.1 1015.5 1474.8 1025.0 C1476.5 1034.5 1479.5 1052.0 1481.3 1062.8 C1483.1 1073.6 1484.1 1082.2 1485.6 1090.0 C1487.1 1097.8 1488.5 1099.7 1490.2 1109.5 C1491.9 1119.3 1495.0 1142.1 1496.0 1148.6 M1468.4 1110.6 L1484.5 1108.3 M1473.0 1139.4 L1486.8 1138.2 M1500.0 1041.0 C1503.3 1040.5 1513.3 1039.2 1520.0 1038.0 C1526.7 1036.8 1533.0 1035.3 1540.0 1034.0 C1547.0 1032.7 1556.3 1031.5 1562.0 1030.0 C1567.7 1028.5 1572.5 1027.7 1574.0 1025.0 C1575.5 1022.3 1573.8 1017.2 1571.0 1014.0 C1568.2 1010.8 1562.0 1008.2 1557.0 1006.0 C1552.0 1003.8 1545.5 1001.8 1541.0 1001.0 C1536.5 1000.2 1532.7 1000.2 1530.0 1001.0 C1527.3 1001.8 1524.8 1002.5 1525.0 1006.0 C1525.2 1009.5 1528.8 1016.3 1531.0 1022.0 C1533.2 1027.7 1536.0 1033.7 1538.0 1040.0 C1540.0 1046.3 1541.7 1054.2 1543.0 1060.0 C1544.3 1065.8 1546.5 1069.2 1546.0 1075.0 C1545.5 1080.8 1543.2 1090.3 1540.0 1095.0 C1536.8 1099.7 1532.0 1102.5 1527.0 1103.0 C1522.0 1103.5 1513.8 1101.0 1510.0 1098.0 C1506.2 1095.0 1503.2 1088.8 1504.0 1085.0 C1504.8 1081.2 1509.8 1076.7 1515.0 1075.0 C1520.2 1073.3 1528.3 1072.8 1535.0 1075.0 C1541.7 1077.2 1548.3 1084.8 1555.0 1088.0 C1561.7 1091.2 1565.5 1093.0 1575.0 1094.0 C1584.5 1095.0 1605.8 1094.0 1612.0 1094.0 M1594.1 1053.6 C1593.1 1058.9 1591.5 1075.2 1588.0 1085.7 C1584.5 1096.2 1579.2 1108.3 1573.0 1116.7 C1566.8 1125.1 1554.7 1132.8 1551.0 1136.0 M1626.3 975.1 L1627.3 988.2 M1653.9 972.1 L1653.9 985.2 M1684.1 981.1 L1684.1 989.2 M1605.1 1016.3 C1608.5 1015.8 1617.2 1014.7 1625.3 1013.3 C1633.3 1011.9 1648.7 1008.7 1653.4 1007.8 M1641.3 1017.4 C1641.8 1022.1 1643.6 1032.6 1644.4 1045.5 C1645.2 1058.4 1645.6 1082.3 1646.4 1095.0 C1647.2 1107.7 1648.6 1117.3 1649.0 1121.8 M1629.3 1056.6 C1632.8 1055.1 1642.5 1050.3 1650.4 1047.5 C1658.3 1044.7 1672.2 1040.8 1676.6 1039.5 M1653.4 1083.7 L1685.6 1070.7 M1481.0 1181.9 C1486.6 1180.2 1508.1 1172.2 1514.4 1171.6 C1520.7 1171.0 1519.4 1174.2 1519.0 1178.4 C1518.6 1182.6 1515.5 1191.2 1512.1 1196.8 C1508.6 1202.4 1502.9 1208.1 1498.3 1211.8 C1493.7 1215.5 1487.8 1219.5 1484.5 1218.7 C1481.2 1217.9 1478.9 1211.0 1478.7 1207.2 C1478.5 1203.4 1480.0 1197.6 1483.3 1195.7 C1486.6 1193.8 1492.3 1194.8 1498.3 1195.7 C1504.2 1196.7 1512.7 1199.1 1519.0 1201.4 C1525.3 1203.7 1530.5 1205.7 1536.2 1209.5 C1541.9 1213.3 1550.5 1221.9 1553.4 1224.4 M1565.0 1148.0 C1567.8 1147.7 1577.8 1144.0 1582.0 1146.0 C1586.2 1148.0 1590.0 1155.3 1590.0 1160.0 C1590.0 1164.7 1585.0 1171.0 1582.0 1174.0 C1579.0 1177.0 1573.7 1177.3 1572.0 1178.0 M1556.0 1152.0 C1557.1 1158.3 1559.2 1178.9 1562.6 1190.0 C1566.0 1201.1 1574.1 1213.9 1576.4 1218.7 M1570.7 1208.3 C1575.5 1206.2 1592.9 1198.6 1599.4 1195.7 C1606.0 1192.8 1608.2 1191.8 1610.0 1191.0 M1626.0 1145.9 C1629.9 1143.5 1645.3 1131.0 1649.5 1131.6 C1653.7 1132.2 1648.3 1145.3 1651.3 1149.4 C1654.3 1153.5 1664.7 1152.2 1667.4 1156.0 C1670.1 1159.8 1670.5 1168.9 1667.4 1172.4 C1664.3 1175.9 1655.5 1175.1 1649.0 1177.0 C1642.5 1178.9 1632.9 1182.1 1628.3 1183.9 C1623.7 1185.7 1621.8 1186.5 1621.4 1188.0 C1621.0 1189.5 1622.9 1192.7 1626.0 1193.0 C1629.1 1193.3 1635.4 1191.5 1640.0 1190.0 C1644.6 1188.5 1644.6 1182.6 1653.6 1183.9 C1662.6 1185.2 1686.5 1196.8 1693.8 1197.6 C1701.1 1198.3 1697.0 1193.8 1697.2 1188.4 C1697.4 1183.1 1697.7 1175.5 1695.0 1165.5 C1692.3 1155.5 1683.4 1134.8 1681.1 1128.7 M1623.7 1172.4 L1653.6 1159.7" stroke="#e7a88b" stroke-width="16.5"/></g>
 <circle cx="1166" cy="826.5" r="2.6" fill="none" stroke="#000" stroke-width="1.1"/>
</svg>
<!-- DRAW_END -->

<!-- tabs -->
<div class="tab" style="left:38px;width:563px"></div>
<div class="tab" style="left:602px;width:561px"></div>
<div class="tab" style="left:1164px;width:562px;top:82px;height:30px;background:#474747"></div>
<div class="tab" style="left:1727px;width:560px"></div>
<div class="t" style="left:262.5px;top:91.8px;font-size:12.5px"><svg class="cj" viewBox="-0.5 -0.5 13 13"><path d="M6 1 C6 5 4.5 9 1 11.5 M6 4.5 C7 8 9 10.5 11.5 11.5" fill="none" stroke="#dcdcdc" stroke-width="1"/></svg>-<svg class="cj" viewBox="-0.5 -0.5 13 13"><path d="M0.5 5 H4.5 M2.5 1.5 V9.5 M0.5 10.8 L4.8 9.3 M8.5 0.3 L9 2 M5.5 3 H11.5 M6.8 5.5 H10 V10.3 Q10 11.5 11.5 11.5 M7.8 5.5 Q7.8 10 5.3 11.7" fill="none" stroke="#dcdcdc" stroke-width="1"/></svg>.kra (2.4 GiB)</div>
<div class="t" style="left:825.5px;top:91.8px;font-size:12.5px"><svg class="cj" viewBox="-0.5 -0.5 13 13"><path d="M6 1 C6 5 4.5 9 1 11.5 M6 4.5 C7 8 9 10.5 11.5 11.5" fill="none" stroke="#dcdcdc" stroke-width="1"/></svg>-<svg class="cj" viewBox="-0.5 -0.5 13 13"><path d="M0.8 1.5 H4.5 V5.5 H1.2 V10 Q1.2 11 2.5 11 H5 M7.2 0.3 Q6.8 3 5.5 5.2 M6.6 3 H11.5 M10 3.2 Q9 8 5.5 11.7 M7 5.8 Q9 9 11.7 11.5" fill="none" stroke="#dcdcdc" stroke-width="1"/></svg>.kra (6.9 GiB)</div>
<div class="t" style="left:1384.5px;top:90.8px;font-size:12.7px">bug.kra (30.4 MiB) *</div>
<div class="t" style="left:1954.5px;top:91.8px;font-size:12.5px">7<svg class="cj" viewBox="-0.5 -0.5 13 13"><path d="M0.6 2 L2.2 3.6 M0.5 10.8 L2.6 7 M7.5 0.3 V10.5 Q7.5 11.5 6.3 11.3 M3.8 4 H6 Q5.6 8 3.4 10.2 M11.4 2 L9 5 M8.6 5 Q10 9 11.7 11.2" fill="none" stroke="#dcdcdc" stroke-width="1"/></svg>.kra (4.4 GiB)</div>


<svg style="left:0;top:0" width="2560" height="130">
 <g stroke="#dcdcdc" stroke-width="1.6" fill="none">
  <path d="M572 93 L583 104 M583 93 L572 104"/>
  <path d="M1134 93 L1145 104 M1145 93 L1134 104"/>
  <path d="M1697.5 92 L1708.5 103 M1708.5 92 L1697.5 103"/>
  <path d="M2259.5 93 L2270.5 104 M2270.5 93 L2259.5 104"/>
 </g>
</svg>
<div class="klogo" style="left:51.5px;top:90.5px"></div><div class="klogo" style="left:614.5px;top:90.5px"></div><div class="klogo" style="left:1176.5px;top:89.5px"></div><div class="klogo" style="left:1739.5px;top:90.5px"></div>
<!-- scrollbars -->
<div class="sb" style="left:2274px;top:112px;width:14px;height:1266px"></div>
<div class="sbtn" style="left:2275px;top:113px;width:13px;height:13px"></div>
<div class="sbtn" style="left:2275px;top:471px;width:13px;height:482px;background:#444"></div>
<div class="sbtn" style="left:2275px;top:1364px;width:13px;height:13px"></div>
<div class="sb" style="left:38px;top:1378px;width:2236px;height:14px"></div>
<div class="sbtn" style="left:38px;top:1379px;width:13px;height:13px"></div>
<div class="sbtn" style="left:564px;top:1379px;width:988px;height:13px;background:#444"></div>
<div class="sbtn" style="left:2261px;top:1379px;width:13px;height:13px"></div>

<svg style="left:0;top:0" width="2560" height="1392">
 <path d="M2278 122 H2285 L2281.5 117.5 Z" fill="#9a9a9a"/>
 <path d="M2278 1369 H2285 L2281.5 1373.5 Z" fill="#9a9a9a"/>
 <path d="M46.5 1381.5 V1388.5 L42 1385 Z" fill="#9a9a9a"/>
 <path d="M2265.5 1381.5 V1388.5 L2270 1385 Z" fill="#9a9a9a"/>
</svg>
<!-- FLOATS_START -->
<!-- Specific Color Selector -->
<div class="a" style="left:1652px;top:209px;width:619px;height:200px;background:#474747"></div>
<div class="t" style="left:1655px;top:211.5px;font-size:11.6px">Specific Color Selector</div>
<svg style="left:0;top:0" width="2560" height="900">
 <defs>
  <linearGradient id="hue" x1="0" x2="1">
   <stop offset="0" stop-color="#f00"/><stop offset=".1667" stop-color="#ff0"/><stop offset=".3333" stop-color="#0f0"/><stop offset=".5" stop-color="#0ff"/><stop offset=".6667" stop-color="#00f"/><stop offset=".8333" stop-color="#f0f"/><stop offset="1" stop-color="#f00"/>
  </linearGradient>
  <linearGradient id="sat" x1="0" x2="1"><stop offset="0" stop-color="#bdbdbd"/><stop offset="1" stop-color="#f9a27a"/></linearGradient>
  <linearGradient id="int" x1="0" x2="1"><stop offset="0" stop-color="#000"/><stop offset=".5" stop-color="#d8632f"/><stop offset="1" stop-color="#fff"/></linearGradient>
 </defs>
 <!-- float/close icons -->
 <g fill="none" stroke="#dcdcdc" stroke-width="1.2">
  <rect x="2232.5" y="216.5" width="7" height="6"/><path d="M2235.5 216.5 V213.5 H2242.5 V219.5 H2239.5"/>
  <path d="M2254.5 212.5 L2264.5 222.5 M2264.5 212.5 L2254.5 222.5"/>
  <rect x="2229.5" y="424.5" width="7" height="6"/><path d="M2232.5 424.5 V421.5 H2239.5 V427.5 H2236.5"/>
  <path d="M2251.5 420.5 L2261.5 430.5 M2261.5 420.5 L2251.5 430.5"/>
 </g>
 <!-- combobox -->
 <rect x="1658.5" y="232.5" width="575" height="21" rx="3" fill="#454545" stroke="#2f2f2f"/>
 <rect x="1659.5" y="233.5" width="573" height="19" rx="2" fill="none" stroke="#555"/>
 <path d="M2221.5 242.5 H2230 L2225.8 246.5 Z" fill="#a0a0a0"/>
 <!-- bars -->
 <rect x="1676" y="261" width="523" height="18" fill="url(#hue)"/>
 <rect x="1676" y="292" width="523" height="18" fill="url(#sat)"/>
 <rect x="1676" y="323" width="523" height="18" fill="url(#int)"/>
 <path d="M1698.5 285.5 H1705 L1701.8 282 Z" fill="#cfcfcf"/>
 <path d="M2026.5 316.5 H2033 L2029.8 313 Z" fill="#cfcfcf"/>
 <path d="M2037.5 347.5 H2044 L2040.8 344 Z" fill="#cfcfcf"/>
 <!-- spinboxes -->
 <rect x="2205.5" y="261.5" width="58" height="21" rx="3" fill="#363636" stroke="#303030"/>
 <rect x="2205.5" y="292.5" width="58" height="21" rx="3" fill="#363636" stroke="#303030"/>
 <rect x="2205.5" y="323.5" width="58" height="21" rx="3" fill="#363636" stroke="#303030"/>
 <g fill="#424242" stroke="#505050"><rect x="2250.5" y="262.5" width="12" height="19"/><rect x="2250.5" y="293.5" width="12" height="19"/><rect x="2250.5" y="324.5" width="12" height="19"/></g>
 <g fill="#9a9a9a"><path d="M2253.5 270.5 H2260 L2256.8 267 Z M2253.5 274 H2260 L2256.8 277.5 Z"/><path d="M2253.5 301.5 H2260 L2256.8 298 Z M2253.5 305 H2260 L2256.8 308.5 Z"/><path d="M2253.5 332.5 H2260 L2256.8 329 Z M2253.5 336 H2260 L2256.8 339.5 Z"/></g>
 <!-- color name -->
 <rect x="1861" y="353" width="201" height="24" fill="#e7a88b"/>
 <rect x="2062" y="353" width="202" height="24" rx="2" fill="#383838"/>
 <!-- radios -->
 <circle cx="1665" cy="395" r="7" fill="#383838"/>
 <circle cx="1718" cy="394.5" r="7" fill="#383838"/>
 <circle cx="1718" cy="394.5" r="3" fill="#9c9c9c"/>
 <rect x="1731.5" y="383.5" width="50" height="22" rx="3" fill="#454545" stroke="#303030"/>
 <rect x="1732.5" y="384.5" width="48" height="20" rx="2" fill="none" stroke="#555"/>
 <path d="M1766.5 393 H1775 L1770.8 397 Z" fill="#a0a0a0"/>
</svg>
<div class="t" style="left:1856px;top:237px;font-size:12px">RGB/Alpha (8-bit integer/channel)</div>
<div class="t" style="left:2245px;top:235px;font-size:15px">%</div>
<div class="t" style="left:1658.5px;top:267px">H:</div>
<div class="t" style="left:1658.5px;top:298px">S:</div>
<div class="t" style="left:1658.5px;top:329px">I:</div>
<div class="t" style="left:2208.5px;top:267px;font-size:11.5px">18.91</div>
<div class="t" style="left:2208.5px;top:298px;font-size:11.5px">68.28</div>
<div class="t" style="left:2208.5px;top:329px;font-size:11.5px">70.33</div>
<div class="t" style="left:1658px;top:359px">Color name:</div>
<div class="t" style="left:2215px;top:359px;font-size:11.5px">#e7a88b</div>
<div class="t" style="left:1678.5px;top:389px;font-size:11.5px">RGB</div>
<div class="t" style="left:1736.5px;top:389px;font-size:11.5px">HSI</div>

<!-- Tool options -->
<div class="a" style="left:1897px;top:417px;width:371px;height:459px;background:#474747"></div>
<div class="t" style="left:1900px;top:420.5px;font-size:11.6px">Tool Options</div>
<svg style="left:0;top:0" width="2560" height="900">
 <rect x="2027.5" y="443.5" width="234" height="22" rx="3" fill="#454545" stroke="#2f2f2f"/>
 <rect x="2028.5" y="444.5" width="232" height="20" rx="2" fill="none" stroke="#555"/>
 <path d="M2246.5 453 H2255 L2250.8 457 Z" fill="#a0a0a0"/>
 <rect x="1902" y="472" width="361" height="1" fill="#2e2e2e"/>
 <rect x="1902" y="473" width="361" height="1" fill="#555"/>
 <rect x="1902" y="484" width="14" height="14" fill="#383838"/>
 <g fill="none" stroke="#dcdcdc" stroke-width="1.2">
  <rect x="2229.5" y="424.5" width="7" height="6"/><path d="M2232.5 424.5 V421.5 H2239.5 V427.5 H2236.5"/>
  <path d="M2251.5 420.5 L2261.5 430.5 M2261.5 420.5 L2251.5 430.5"/>
 </g>
</svg>
<div class="t" style="left:1902.5px;top:449.5px">Brush Smoothing:</div>
<div class="t" style="left:2032px;top:449.5px">None</div>
<div class="t" style="left:1921px;top:485.5px">Snap to Assistants</div>
<!-- FLOATS_END -->

<!-- DOCK_START -->
<div class="a" style="left:2288px;top:82px;width:272px;height:1310px;background:#474747"></div>
<svg style="left:0;top:0" width="2560" height="1392">
<circle cx="2304" cy="89" r="7.3" fill="none" stroke="#dcdcdc" stroke-width="1.1"/><rect x="2300" y="88" width="8" height="5" fill="#dcdcdc"/><path d="M2301.5 88 V86.5 C2301.5 84 2306.5 84 2306.5 86.5 V88" fill="none" stroke="#dcdcdc" stroke-width="1.2"/>
<circle cx="2304" cy="283" r="7.3" fill="none" stroke="#dcdcdc" stroke-width="1.1"/><rect x="2300" y="283" width="8" height="4" fill="#dcdcdc"/><path d="M2301 283 V281 C2301 278 2306 277.5 2307 280.5" fill="none" stroke="#dcdcdc" stroke-width="1.2"/>

 <defs>
  <linearGradient id="hue2" x1="0" x2="1">
   <stop offset="0" stop-color="#f00"/><stop offset=".1667" stop-color="#ff0"/><stop offset=".3333" stop-color="#0f0"/><stop offset=".5" stop-color="#0ff"/><stop offset=".6667" stop-color="#00f"/><stop offset=".8333" stop-color="#f0f"/><stop offset="1" stop-color="#f00"/>
  </linearGradient>
  <linearGradient id="svh" x1="0" x2="1"><stop offset="0" stop-color="#fff"/><stop offset="1" stop-color="#ff5000"/></linearGradient>
  <linearGradient id="svv" x1="0" y1="0" x2="0" y2="1"><stop offset="0" stop-color="#000" stop-opacity="0"/><stop offset="1" stop-color="#000"/></linearGradient>
 </defs>
 <rect x="2304" y="107" width="246" height="32" fill="url(#hue2)"/>
 <rect x="2315" y="107" width="1" height="32" fill="#000"/><rect x="2316" y="107" width="1" height="32" fill="#fff"/>
 <rect x="2304" y="145" width="246" height="114" fill="url(#svh)"/>
 <rect x="2304" y="145" width="246" height="114" fill="url(#svv)"/>
 <circle cx="2402" cy="155.5" r="4.3" fill="none" stroke="#000" stroke-width="1.1"/>
 <circle cx="2402" cy="155.5" r="5.3" fill="none" stroke="#fff" stroke-width="0.8" stroke-opacity=".6"/>
 <g fill="#9a9a9a"><rect x="2420" y="271" width="1" height="1"/><rect x="2423" y="271" width="1" height="1"/><rect x="2426" y="271" width="1" height="1"/><rect x="2429" y="271" width="1" height="1"/><rect x="2432" y="271" width="1" height="1"/><rect x="2435" y="271" width="1" height="1"/></g>
 <g fill="none" stroke="#dcdcdc" stroke-width="1.2">
  <rect x="2520.5" y="283.5" width="8" height="7"/><path d="M2523.5 283.5 V279.5 H2532.5 V286.5 H2528.5"/>
  <path d="M2545.5 278.5 L2554.5 287.5 M2554.5 278.5 L2545.5 287.5"/>
 </g>
 <!-- blend combo -->
 <rect x="2295.5" y="293.5" width="229" height="29" rx="3" fill="#454545" stroke="#2f2f2f"/>
 <rect x="2296.5" y="294.5" width="227" height="27" rx="2" fill="none" stroke="#565656"/>
 <path d="M2509.5 306 H2518 L2513.8 310 Z" fill="#a0a0a0"/>
 <!-- filter icon -->
 <path d="M2535.5 299.5 H2550.5 L2545 307 V315.5 L2541 312 V307 Z" fill="none" stroke="#dcdcdc" stroke-width="1.2"/>
 <path d="M2551 318 H2557 L2554 321 Z" fill="#9a9a9a"/>
 <!-- opacity -->
 <rect x="2295.5" y="326.5" width="229" height="28" rx="3" fill="#3a3a3a" stroke="#303030"/>
 <rect x="2296" y="327" width="215" height="27" rx="2" fill="#557390"/>
 <path d="M2514.5 339 H2521 L2517.8 335.5 Z M2514.5 344.5 H2521 L2517.8 348 Z" fill="#6a6a6a"/>
 <g fill="#dcdcdc"><rect x="2537" y="336" width="12" height="1.6"/><rect x="2537" y="340" width="12" height="1.6"/><rect x="2537" y="344" width="12" height="1.6"/></g>
 <path d="M2551 351 H2557 L2554 354 Z" fill="#9a9a9a"/>
 <!-- list -->
 <rect x="2295" y="358" width="265" height="1003" fill="#373737"/>
 <rect x="2295" y="385" width="265" height="1" fill="#3c3c3c"/>
 <rect x="2295" y="411.5" width="265" height="1" fill="#3c3c3c"/>
 <rect x="2295" y="438.5" width="265" height="1" fill="#3c3c3c"/>
 <rect x="2340" y="359" width="218" height="26" fill="#557390"/>

<path d="M2300 372 C2303 366 2311 366 2314 372 C2311 375 2303 375 2300 372 Z" fill="none" stroke="#d4d4d4" stroke-width="1.1"/><circle cx="2307" cy="370.8" r="3.3" fill="#d4d4d4"/><path d="M2300.5 376 C2304 379.5 2310 379.5 2313.5 376" fill="none" stroke="#d4d4d4" stroke-width="1.1"/>
<rect x="2322" y="366" width="14" height="14" fill="#2c2c2c"/>
<rect x="2504" y="371" width="12" height="8" fill="#7a93ad"/><path d="M2511 371 V368 C2511 365 2515 365 2515 368.5" fill="none" stroke="#7a93ad" stroke-width="1.5"/>
<text x="2521" y="376" font-family="Liberation Sans" font-style="italic" font-size="19" stroke="#7a93ad" stroke-width="0.6" fill="#7a93ad">α</text>
<rect x="2540" y="365" width="15" height="15" fill="#6d87a1"/><rect x="2540" y="365" width="5" height="5" fill="#8aa2b9"/><rect x="2540" y="375" width="5" height="5" fill="#8aa2b9"/><rect x="2545" y="370" width="5" height="5" fill="#8aa2b9"/><rect x="2550" y="365" width="5" height="5" fill="#8aa2b9"/><rect x="2550" y="375" width="5" height="5" fill="#8aa2b9"/>
<path d="M2374.0 361.5 H2381.0 V368 L2378.5 370.5 H2373.0 V366" fill="none" stroke="#dcdcdc" stroke-width="1.1"/><path d="M2371.0 363 L2376.5 368.5" stroke="#dcdcdc" stroke-width="1.1"/>
<path d="M2300 399 C2303 393 2311 393 2314 399 C2311 402 2303 402 2300 399 Z" fill="none" stroke="#d4d4d4" stroke-width="1.1"/><circle cx="2307" cy="397.8" r="3.3" fill="#d4d4d4"/><path d="M2300.5 403 C2304 406.5 2310 406.5 2313.5 403" fill="none" stroke="#d4d4d4" stroke-width="1.1"/>
<rect x="2322" y="393" width="14" height="14" fill="#2c2c2c"/>
<rect x="2504" y="398" width="12" height="8" fill="#666"/><path d="M2511 398 V395 C2511 392 2515 392 2515 395.5" fill="none" stroke="#666" stroke-width="1.5"/>
<text x="2521" y="403" font-family="Liberation Sans" font-style="italic" font-size="19" stroke="#666" stroke-width="0.6" fill="#666">α</text>
<rect x="2540" y="392" width="15" height="15" fill="#4f4f4f"/><rect x="2540" y="392" width="5" height="5" fill="#5f5f5f"/><rect x="2540" y="402" width="5" height="5" fill="#5f5f5f"/><rect x="2545" y="397" width="5" height="5" fill="#5f5f5f"/><rect x="2550" y="392" width="5" height="5" fill="#5f5f5f"/><rect x="2550" y="402" width="5" height="5" fill="#5f5f5f"/>
<path d="M2374.0 388.5 H2381.0 V395 L2378.5 397.5 H2373.0 V393" fill="none" stroke="#dcdcdc" stroke-width="1.1"/><path d="M2371.0 390 L2376.5 395.5" stroke="#dcdcdc" stroke-width="1.1"/>
<path d="M2300 426 C2303 420 2311 420 2314 426 C2311 429 2303 429 2300 426 Z" fill="none" stroke="#d4d4d4" stroke-width="1.1"/><circle cx="2307" cy="424.8" r="3.3" fill="#d4d4d4"/><path d="M2300.5 430 C2304 433.5 2310 433.5 2313.5 430" fill="none" stroke="#d4d4d4" stroke-width="1.1"/>
<rect x="2322" y="420" width="14" height="14" fill="#2c2c2c"/>
<rect x="2504" y="425" width="12" height="8" fill="#666"/><path d="M2511 425 V422 C2511 419 2515 419 2515 422.5" fill="none" stroke="#666" stroke-width="1.5"/>
<text x="2521" y="430" font-family="Liberation Sans" font-style="italic" font-size="19" stroke="#666" stroke-width="0.6" fill="#666">α</text>
<rect x="2540" y="419" width="15" height="15" fill="#4f4f4f"/><rect x="2540" y="419" width="5" height="5" fill="#5f5f5f"/><rect x="2540" y="429" width="5" height="5" fill="#5f5f5f"/><rect x="2545" y="424" width="5" height="5" fill="#5f5f5f"/><rect x="2550" y="419" width="5" height="5" fill="#5f5f5f"/><rect x="2550" y="429" width="5" height="5" fill="#5f5f5f"/>
<path d="M2374.0 415.5 H2381.0 V422 L2378.5 424.5 H2373.0 V420" fill="none" stroke="#dcdcdc" stroke-width="1.1"/><path d="M2371.0 417 L2376.5 422.5" stroke="#dcdcdc" stroke-width="1.1"/>
<path d="M2325.5 373 L2328.5 377 L2333 367.5" fill="none" stroke="#dcdcdc" stroke-width="1.4"/>
<defs><pattern id="tchk" width="4" height="4" patternUnits="userSpaceOnUse"><rect width="4" height="4" fill="#fff"/><rect width="2" height="2" fill="#d8d8d8"/><rect x="2" y="2" width="2" height="2" fill="#d8d8d8"/></pattern></defs>
<rect x="2343.5" y="367.5" width="21" height="10" fill="url(#tchk)" stroke="#222"/>
<path d="M2346 371 L2349 373 L2352 370.5 L2355 374 L2358 371 L2362 374 M2347 375 L2351 372 M2356 370 L2360 372" stroke="#e7a88b" stroke-width="1" fill="none"/>
<rect x="2345" y="390" width="18" height="20" fill="url(#tchk)"/>
<path d="M2346 393 L2350 395 L2348 399 L2353 398 L2351 403 L2356 401 L2354 406 L2359 404 L2361 408 M2355 392 L2358 396 L2361 394 M2347 405 L2350 408 M2357 398 L2362 399" stroke="#e7a88b" stroke-width="1.1" fill="none"/>
<rect x="2344" y="417" width="20" height="20" fill="#fff"/>
<rect x="2483.5" y="392.5" width="14" height="14" fill="none" stroke="#dcdcdc" stroke-width="1.1"/>
</svg>
<div class="t" style="left:2318px;top:83.5px;font-size:11.6px">Small Color Selector</div>
<div class="t" style="left:2318.5px;top:277.5px;font-size:11.6px">Layers</div>
<div class="t" style="left:2300px;top:303px;font-size:12px">Normal</div>
<div class="t" style="left:2364px;top:335.5px;font-size:11.6px">Opacity:  100%</div>
<div class="t" style="left:2384.5px;top:367px;font-size:11px;font-weight:bold;color:#e0e0e0">Paint Layer 2</div>
<div class="t" style="left:2384.5px;top:394px;font-size:11.2px">Paint Layer 1</div>
<div class="t" style="left:2384px;top:420px;font-size:12px"><svg class="cj" viewBox="-0.5 -0.5 13 13"><path d="M0.8 3 H5 M5.2 0.3 V4.8 M1 5.2 L5.2 4.6 M6.8 2.8 H11 M6.8 0.3 V3.6 Q6.8 4.8 8.2 4.8 H11.3 M3.2 6.3 V11.7 M3.2 6.3 H8.8 V11.7 M3.2 8.3 H8.8 M3.2 10.2 H8.8" fill="none" stroke="#dcdcdc" stroke-width="1"/></svg><svg class="cj" viewBox="-0.5 -0.5 13 13"><path d="M3 0.5 H9 V4.3 H3 Z M3 2.4 H9 M0.5 5.4 H11.5 M3.5 6.6 H8.5 V8.6 H3.5 Z M6 8.8 V11.3 Q6 11.8 5.2 11.6 M3.4 9.6 L1.6 11.5 M8.6 9.6 L10.4 11.5" fill="none" stroke="#dcdcdc" stroke-width="1"/></svg></div>
<div class="t" style="left:2485px;top:394px;font-size:12px;font-weight:bold;letter-spacing:-1px">Fx</div>

<svg style="left:0;top:0" width="2560" height="1392">
 <g fill="#dcdcdc">
  <rect x="2301" y="1375" width="18" height="2"/><rect x="2309" y="1367" width="2" height="18.5"/>
 </g>
 <path d="M2327 1374.5 H2335 L2331 1378 Z" fill="#8a8a8a"/>
 <g fill="none" stroke="#dcdcdc" stroke-width="1.6">
  <rect x="2348.5" y="1366.8" width="15" height="15"/><path d="M2344.5 1370 V1385.5 H2360"/>
  <path d="M2376 1371 L2386 1381 L2396 1371"/>
  <path d="M2408 1382 L2418 1372 L2428 1382"/>
 </g>
 <g fill="#dcdcdc"><rect x="2440" y="1368.5" width="20" height="2"/><rect x="2440" y="1375" width="20" height="2"/><rect x="2440" y="1381.5" width="20" height="2"/>
 <circle cx="2455" cy="1369.5" r="2"/><circle cx="2445" cy="1376" r="2"/><circle cx="2451" cy="1382.5" r="2"/></g>
 <path d="M2467 1374.5 H2475 L2471 1378 Z" fill="#8a8a8a"/>
 <path d="M2535 1369 H2553 V1371 H2535 Z M2541 1369 C2541 1365.5 2547 1365.5 2547 1369" fill="#dcdcdc" stroke="#dcdcdc" stroke-width="1"/>
 <path d="M2537 1372 H2551 V1384 C2551 1385.5 2550 1386 2549 1386 H2539 C2538 1386 2537 1385.5 2537 1384 Z" fill="#dcdcdc"/>
</svg>
<!-- DOCK_END -->

<!-- TOOLBOX_START -->
<!-- toolbox -->
<div class="a" style="left:0;top:82px;width:38px;height:1310px;background:#474747"></div>
<div class="a" style="left:0;top:81px;width:32px;height:17px;background:#424242;border:1px solid #393939;border-left:none"></div>
<div class="a" style="left:1px;top:234px;width:30px;height:30px;background:#5d7892;border:1px solid #6e88a0;border-radius:3px"></div>
<svg style="left:0;top:0" width="40" height="1392">
<rect x="6" y="231" width="20" height="1" fill="#3d3d3d"/>
<rect x="6" y="557" width="20" height="1" fill="#3d3d3d"/>
<rect x="6" y="659" width="20" height="1" fill="#3d3d3d"/>
<rect x="6" y="857" width="20" height="1" fill="#3d3d3d"/>
<rect x="6" y="959" width="20" height="1" fill="#3d3d3d"/>
<rect x="6" y="1221" width="20" height="1" fill="#3d3d3d"/>
<g transform="translate(5,104)"><path d="M3.7 0.5 L17 13.5 L11.5 13.8 L14.5 20.5 L11.5 21.8 L8.5 15 L3.7 19.5 Z" fill="#d8d8d8"/></g>
<g transform="translate(5,136)"><path d="M1 0 H21 V6 H19 V3 H12.5 V19 H16 V22 H6 V19 H9.5 V3 H3 V6 H1 Z" fill="#d8d8d8"/></g>
<g transform="translate(5,168)"><path d="M3 17 C3 8 8 4 19 3" fill="none" stroke="#d8d8d8" stroke-width="1.5"/><rect x="0.5" y="16.5" width="4" height="4" fill="#474747" stroke="#d8d8d8" stroke-width="1.3"/><rect x="4.5" y="3.5" width="4" height="4" fill="#474747" stroke="#d8d8d8" stroke-width="1.3"/><rect x="17.5" y="1" width="4" height="4" fill="#474747" stroke="#d8d8d8" stroke-width="1.3"/><path d="M11 9 L20 16 L15 16.5 L11.5 21 Z" fill="#d8d8d8"/></g>
<g transform="translate(5,200)"><path d="M13 3 L19 9 L14 19 L1 21.5 L3 9 Z" fill="#d8d8d8"/><path d="M1 21.5 L8.5 13.5" stroke="#474747" stroke-width="1.5"/><circle cx="9.5" cy="12.5" r="1.8" fill="#474747"/><path d="M15 1 L21 7" stroke="#d8d8d8" stroke-width="2"/></g>
<g transform="translate(5,238)"><path d="M22 1.5 C22.5 2.5 22 3.5 21.5 4.5 L16.5 10.5 L13 8 L18 2 C19 1 21 0.5 22 1.5 Z" fill="#d8d8d8"/><path d="M11.8 9 L15.8 12 L14.8 13.5 L10.8 10.5 Z" fill="#d8d8d8"/><path d="M10 11.5 C6 11.5 5.5 15.5 4 18 C3 19.5 1.5 20.5 0 21 C7 22 12.5 20 14 15 Z" fill="#d8d8d8"/></g>
<g transform="translate(5,270)"><path d="M2 20 L20 2" stroke="#d8d8d8" stroke-width="2"/></g>
<g transform="translate(5,302)"><rect x="1" y="1" width="20" height="20" fill="none" stroke="#d8d8d8" stroke-width="2"/></g>
<g transform="translate(5,334)"><circle cx="11" cy="11" r="10" fill="none" stroke="#d8d8d8" stroke-width="2"/></g>
<g transform="translate(5,366)"><path d="M1 9 L8.5 1 H21 V10 L14 21 H1 Z" fill="none" stroke="#d8d8d8" stroke-width="2"/></g>
<g transform="translate(5,398)"><path d="M11 0.5 L1 21 L21 11 L1 2" fill="none" stroke="#d8d8d8" stroke-width="2"/></g>
<g transform="translate(5,430)"><path d="M1 22 C1 10 5 3 11 3 C17 3 21 10 21 22" fill="none" stroke="#d8d8d8" stroke-width="2"/><path d="M1 3 H21" stroke="#d8d8d8" stroke-width="1.5"/><circle cx="2" cy="3" r="2.2" fill="#d8d8d8"/><circle cx="20" cy="3" r="2.2" fill="#d8d8d8"/><rect x="9" y="1" width="4" height="4" fill="#474747" stroke="#d8d8d8" stroke-width="1.2"/></g>
<g transform="translate(5,462)"><path d="M3 12 C3 6 10 3 19 3 C14 7 13 12 15 17" fill="none" stroke="#d8d8d8" stroke-width="2.5"/><rect x="0.5" y="10" width="4" height="4" fill="#474747" stroke="#d8d8d8" stroke-width="1.3"/><rect x="17" y="0.5" width="4" height="4" fill="#474747" stroke="#d8d8d8" stroke-width="1.3"/><rect x="13" y="17" width="4" height="4" fill="#474747" stroke="#d8d8d8" stroke-width="1.3"/></g>
<g transform="translate(5,494)"><path d="M1 21 C9 19 20 14 21 7 C21 2 12 1 4 4" fill="none" stroke="#d8d8d8" stroke-width="2"/><circle cx="11.5" cy="10" r="1.8" fill="#d8d8d8"/></g>
<g transform="translate(5,526)"><path d="M21 0 L11 12 L19 9 Z M11 3 L6 14 L8 15 Z M21 11 L13 16 L14 18 Z" fill="#d8d8d8"/><circle cx="5" cy="17" r="3" fill="#d8d8d8"/><circle cx="13.5" cy="19" r="3" fill="#d8d8d8"/><circle cx="8" cy="9" r="2.5" fill="#d8d8d8"/></g>
<g transform="translate(5,564)"><rect x="2" y="2" width="18" height="18" fill="none" stroke="#d8d8d8" stroke-width="2"/><circle cx="2" cy="2" r="1.8" fill="#d8d8d8"/><circle cx="20" cy="2" r="1.8" fill="#d8d8d8"/><circle cx="2" cy="20" r="1.8" fill="#d8d8d8"/><circle cx="20" cy="20" r="1.8" fill="#d8d8d8"/><circle cx="11" cy="2" r="1.5" fill="#d8d8d8"/><circle cx="11" cy="20" r="1.5" fill="#d8d8d8"/><circle cx="2" cy="11" r="1.5" fill="#d8d8d8"/><circle cx="20" cy="11" r="1.5" fill="#d8d8d8"/><circle cx="11" cy="11" r="1.5" fill="#d8d8d8"/></g>
<g transform="translate(5,596)"><path d="M11 1 V21 M1 11 H21" stroke="#d8d8d8" stroke-width="2"/><path d="M11 0 L15 5 H7 Z M11 22 L15 17 H7 Z M0 11 L5 7 V15 Z M22 11 L17 7 V15 Z" fill="#d8d8d8"/></g>
<g transform="translate(5,628)"><path d="M5 0 V17 H22 M0 5 H17 V22" fill="none" stroke="#d8d8d8" stroke-width="2"/><path d="M2 2 L1 1" stroke="#d8d8d8"/></g>
<g transform="translate(5,666)"><defs><linearGradient id="tg" x1="0" y1="0" x2="1" y2="1"><stop offset="0" stop-color="#222"/><stop offset="1" stop-color="#e0e0e0"/></linearGradient></defs><rect x="0.5" y="0.5" width="21" height="21" fill="none" stroke="#d8d8d8" stroke-width="1.2"/><rect x="2.5" y="2.5" width="17" height="17" fill="url(#tg)"/></g>
<g transform="translate(5,698)"><circle cx="17.5" cy="4.5" r="4.5" fill="#d8d8d8"/><path d="M10 5 L17 12" stroke="#d8d8d8" stroke-width="2.6"/><path d="M11.5 9 L2.5 18 L1.2 21 L4.2 19.8 L13.2 10.8" fill="none" stroke="#d8d8d8" stroke-width="1.6"/></g>
<g transform="translate(5,730)"><path d="M22 0.5 L16 7 L18 9 L23 3 Z" fill="#d8d8d8"/><path d="M14.5 8 C10 7.5 8 11.5 7 14.5 C10.5 15 15 13 16.5 10 Z" fill="#d8d8d8"/><g stroke="#d8d8d8" stroke-width="2.2" stroke-linecap="round"><path d="M11 1.5 V3 M11 19 V20.5 M1.5 11 H3 M19 11 H20.5 M4 4 L5 5 M4.5 18 L5.5 17 M17 17 L18 18"/></g></g>
<g transform="translate(5,762)"><path d="M1 17 L17 1 L21 5 L5 21 Z" fill="#d8d8d8"/><path d="M0.9 5 L4.9 1 L8.9 5 L4.9 9 Z" fill="#d8d8d8"/><path d="M12.3 16.5 L16.3 12.5 L20.3 16.5 L16.3 20.5 Z" fill="#d8d8d8"/></g>
<g transform="translate(5,794)"><path d="M0.5 10.5 L6 2 L18.5 12.5 L10 20 Z" fill="#d8d8d8"/><path d="M4 9.5 L7 5 L13 9.5 Z" fill="#474747"/><path d="M6 2 L5 0.5" stroke="#d8d8d8" stroke-width="1.5"/><path d="M19 14 C20.5 17 21 19 19.5 20.5 C18 20 18 17 19 14 Z" fill="#d8d8d8"/></g>
<g transform="translate(5,826)"><circle cx="11" cy="11" r="10" fill="none" stroke="#d8d8d8" stroke-width="2.6" stroke-dasharray="4.5 3.5"/><circle cx="11" cy="11" r="5.5" fill="none" stroke="#d8d8d8" stroke-width="2"/><path d="M6 11 H16 V12 C16 15 13 16.5 11 16.5 C9 16.5 6 15 6 12 Z" fill="#d8d8d8"/></g>
<g transform="translate(5,864)"><path d="M1 1 L21 21 M21 1 L1 21" stroke="#d8d8d8" stroke-width="2.6"/><circle cx="11" cy="11" r="7" fill="none" stroke="#d8d8d8" stroke-width="1.3"/></g>
<g transform="translate(5,896)"><path d="M20 1 L2 19 H18 V14" fill="none" stroke="#d8d8d8" stroke-width="2.6"/><path d="M12 9 C15 12 16 15 16 19" fill="none" stroke="#d8d8d8" stroke-width="2"/></g>
<g transform="translate(5,928)"><path d="M12 0 L22 9 L17 12 L14 16 L11 15 L7 11 L6 8 L10 5 Z" fill="#d8d8d8"/><path d="M0 22 L9 13" stroke="#d8d8d8" stroke-width="1.3"/></g>
<g transform="translate(5,966)"><path d="M1.3 7 V1.3 H7 M15 1.3 H20.7 V7 M20.7 15 V20.7 H15 M7 20.7 H1.3 V15 M8.5 1.3 H13.5 M8.5 20.7 H13.5 M1.3 8.5 V13.5 M20.7 8.5 V13.5" fill="none" stroke="#d8d8d8" stroke-width="2.6"/></g>
<g transform="translate(5,998)"><circle cx="11" cy="11" r="9.7" fill="none" stroke="#d8d8d8" stroke-width="2.6" stroke-dasharray="4.6 3.02" stroke-dashoffset="2.3"/></g>
<g transform="translate(5,1030)"><path d="M1 9 L8.5 1 H21 V10 L14 21 H1 Z" fill="none" stroke="#d8d8d8" stroke-width="2.6" stroke-dasharray="4.5 3.5"/></g>
<g transform="translate(5,1062)"><path d="M3 3 C12 -1 21 5 21 12 C21 20 13 23 10 19 C7 14 13 11 12 8 C10 5 4 9 6 14" fill="none" stroke="#d8d8d8" stroke-width="2.6" stroke-dasharray="4.5 3.5"/></g>
<g transform="translate(5,1094)"><path d="M7 1 V13 M1 7 H13 M2.5 2.5 L11.5 11.5 M11.5 2.5 L2.5 11.5" stroke="#d8d8d8" stroke-width="2.5"/><path d="M9 9 L21 21" stroke="#d8d8d8" stroke-width="3"/></g>
<g transform="translate(5,1126)"><path d="M1.3 7 V1.3 H7 M20.7 15 V20.7 H15 M7 20.7 H1.3 V15 M8.5 20.7 H13.5 M1.3 8.5 V13.5" fill="none" stroke="#d8d8d8" stroke-width="2.6"/><path d="M15 7 L6 16 L5 18 L7 17 L16 8" fill="none" stroke="#d8d8d8" stroke-width="1.5"/><circle cx="18" cy="4" r="3.5" fill="#d8d8d8"/><path d="M13 5 L17 9" stroke="#d8d8d8" stroke-width="2.5"/></g>
<g transform="translate(5,1158)"><path d="M2 6 C2 18 6 21 11 21 C16 21 20 18 20 6" fill="none" stroke="#d8d8d8" stroke-width="2.6" stroke-dasharray="4.5 3.5"/><path d="M2 3 H20" stroke="#d8d8d8" stroke-width="1.5"/><circle cx="2" cy="3" r="2.3" fill="#d8d8d8"/><circle cx="20" cy="3" r="2.3" fill="#d8d8d8"/><rect x="9" y="1" width="4" height="4" fill="#474747" stroke="#d8d8d8" stroke-width="1.2"/></g>
<g transform="translate(5,1190)"><path d="M1.3 7 V1.3 H7 M20.7 15 V20.7 H15 M7 20.7 H1.3 V15 M8.5 20.7 H13.5 M1.3 8.5 V13.5" fill="none" stroke="#d8d8d8" stroke-width="2.6"/><path d="M8 8 C9 2 20 2 20 9 C20 13 16 15 12 19" fill="none" stroke="#d8d8d8" stroke-width="2.5" stroke-dasharray="5 3"/></g>
<g transform="translate(5,1228)"><circle cx="8.5" cy="8.5" r="6.8" fill="none" stroke="#d8d8d8" stroke-width="2.6"/><path d="M13 13 L21 21" stroke="#d8d8d8" stroke-width="3.2"/></g>
<g transform="translate(5,1260)"><path d="M4 7 H7 V1 H9.5 V9 V0 H12.5 V9 V1 H15 V9 V3 H18 V22 H8 L0 13 L2 11 L5 14 V7 Z" fill="#d8d8d8"/></g>
<g fill="#9a9a9a"><rect x="35" y="731" width="1" height="1"/><rect x="35" y="734" width="1" height="1"/><rect x="35" y="737" width="1" height="1"/><rect x="35" y="740" width="1" height="1"/><rect x="35" y="743" width="1" height="1"/><rect x="35" y="746" width="1" height="1"/></g>
</svg>
<!-- TOOLBOX_END -->
</body></html>
